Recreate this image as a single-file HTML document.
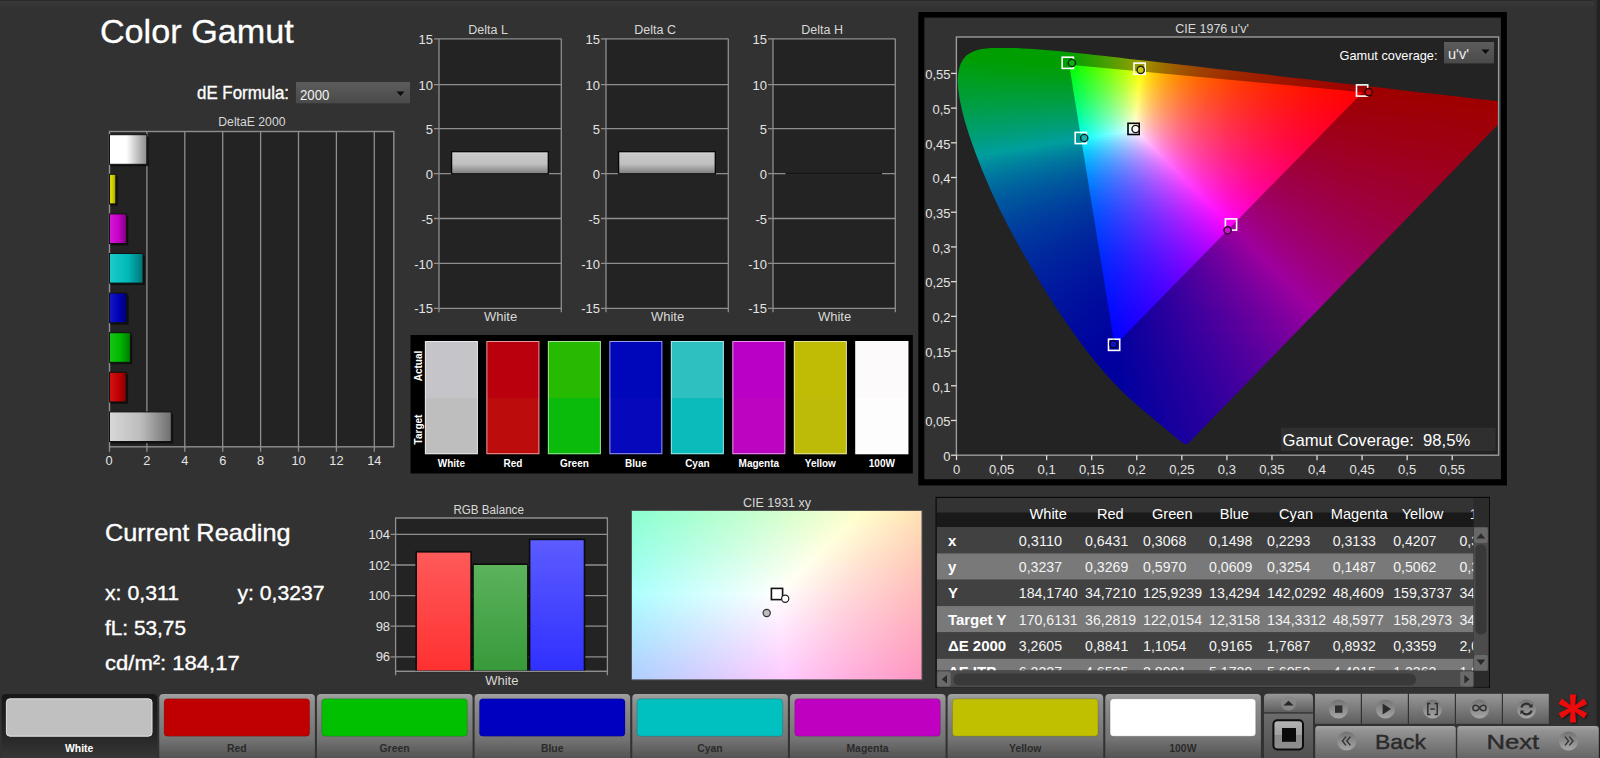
<!DOCTYPE html>
<html><head><meta charset="utf-8"><title>Color Gamut</title>
<style>
html,body{margin:0;padding:0;background:#323232}
body{width:1600px;height:758px;position:relative;overflow:hidden;font-family:"Liberation Sans", sans-serif}
svg{position:absolute;left:0;top:0;font-family:"Liberation Sans", sans-serif}
.cie{position:absolute;overflow:hidden}
.lay{position:absolute;left:0;top:0;width:100%;height:100%}
.cie i{position:absolute;display:block}
.strip{position:absolute;right:0;top:0;width:6px;height:758px;background:linear-gradient(90deg,#323232,#2c2c2c 3.2px,#222 3.6px)}
.topb{position:absolute;left:0;top:0;width:1600px;height:8px;background:linear-gradient(#2b2b2b 0,#2b2b2b 1px,#373737 1.5px,#363636 6px,#323232 8px)}
</style></head><body>
<div class="topb"></div><div class="strip"></div>
<svg width="1600" height="758" viewBox="0 0 1600 758">
<defs>
<linearGradient id="gW" x1="0" x2="1" y1="0" y2="0"><stop offset="0" stop-color="#fff"/><stop offset=".45" stop-color="#fff"/><stop offset="1" stop-color="#8c8c8c"/></linearGradient>
<linearGradient id="gWh" x1="0" x2="1" y1="0" y2="0"><stop offset="0" stop-color="#d8d8d8"/><stop offset=".5" stop-color="#bdbdbd"/><stop offset="1" stop-color="#6e6e6e"/></linearGradient>
<linearGradient id="gY" x1="0" x2="1" y1="0" y2="0"><stop offset="0" stop-color="#e0e010"/><stop offset=".55" stop-color="#cccc00"/><stop offset="1" stop-color="#989800"/></linearGradient>
<linearGradient id="gM" x1="0" x2="1" y1="0" y2="0"><stop offset="0" stop-color="#d818d8"/><stop offset=".55" stop-color="#c400c4"/><stop offset="1" stop-color="#800080"/></linearGradient>
<linearGradient id="gC" x1="0" x2="1" y1="0" y2="0"><stop offset="0" stop-color="#1ccccc"/><stop offset=".55" stop-color="#00b8b8"/><stop offset="1" stop-color="#007474"/></linearGradient>
<linearGradient id="gB" x1="0" x2="1" y1="0" y2="0"><stop offset="0" stop-color="#1818c8"/><stop offset=".55" stop-color="#0000b4"/><stop offset="1" stop-color="#000070"/></linearGradient>
<linearGradient id="gG" x1="0" x2="1" y1="0" y2="0"><stop offset="0" stop-color="#14c814"/><stop offset=".55" stop-color="#00b400"/><stop offset="1" stop-color="#007800"/></linearGradient>
<linearGradient id="gR" x1="0" x2="1" y1="0" y2="0"><stop offset="0" stop-color="#d41414"/><stop offset=".55" stop-color="#c00000"/><stop offset="1" stop-color="#7c0000"/></linearGradient>
<linearGradient id="gD" x1="0" x2="0" y1="0" y2="1"><stop offset="0" stop-color="#eaeaea"/><stop offset=".1" stop-color="#c8c8c8"/><stop offset=".55" stop-color="#c0c0c0"/><stop offset="1" stop-color="#7c7c7c"/></linearGradient>
<linearGradient id="bR" x1="0" x2="0" y1="0" y2="1"><stop offset="0" stop-color="#ff5a5a"/><stop offset="1" stop-color="#ff3030"/></linearGradient>
<linearGradient id="bG" x1="0" x2="0" y1="0" y2="1"><stop offset="0" stop-color="#5cb35c"/><stop offset="1" stop-color="#37993a"/></linearGradient>
<linearGradient id="bB" x1="0" x2="0" y1="0" y2="1"><stop offset="0" stop-color="#5c5cff"/><stop offset="1" stop-color="#3030ff"/></linearGradient>
<linearGradient id="dd" x1="0" x2="0" y1="0" y2="1"><stop offset="0" stop-color="#5c5c5c"/><stop offset="1" stop-color="#4a4a4a"/></linearGradient>
<linearGradient id="th" x1="0" x2="0" y1="0" y2="1"><stop offset="0" stop-color="#2c2c2c"/><stop offset=".55" stop-color="#1c1c1c"/><stop offset=".56" stop-color="#0c0c0c"/><stop offset="1" stop-color="#111"/></linearGradient>
</defs>
<rect x="109.5" y="131.5" width="284.3" height="315.3" fill="#232323"/>
<line x1="146.9" y1="131.5" x2="146.9" y2="451.8" stroke="#8f8f8f" stroke-width="1.3"/>
<line x1="184.8" y1="131.5" x2="184.8" y2="451.8" stroke="#8f8f8f" stroke-width="1.3"/>
<line x1="222.7" y1="131.5" x2="222.7" y2="451.8" stroke="#8f8f8f" stroke-width="1.3"/>
<line x1="260.6" y1="131.5" x2="260.6" y2="451.8" stroke="#8f8f8f" stroke-width="1.3"/>
<line x1="298.5" y1="131.5" x2="298.5" y2="451.8" stroke="#8f8f8f" stroke-width="1.3"/>
<line x1="336.4" y1="131.5" x2="336.4" y2="451.8" stroke="#8f8f8f" stroke-width="1.3"/>
<line x1="374.3" y1="131.5" x2="374.3" y2="451.8" stroke="#8f8f8f" stroke-width="1.3"/>
<line x1="109.5" y1="451.8" x2="109.5" y2="446.8" stroke="#8f8f8f" stroke-width="1.3"/>
<rect x="109.5" y="131.5" width="284.3" height="315.3" fill="none" stroke="#8f8f8f" stroke-width="1.4"/>
<rect x="110.5" y="136.6" width="38.1315" height="29.6" fill="#0a0a0a" opacity=".8"/>
<rect x="109.5" y="134.7" width="37.3315" height="29.6" fill="url(#gW)" stroke="#111" stroke-width="1"/>
<rect x="110.5" y="176.2" width="7.1653" height="29.6" fill="#0a0a0a" opacity=".8"/>
<rect x="109.5" y="174.3" width="6.3653" height="29.6" fill="url(#gY)" stroke="#111" stroke-width="1"/>
<rect x="110.5" y="215.8" width="17.7261" height="29.6" fill="#0a0a0a" opacity=".8"/>
<rect x="109.5" y="213.9" width="16.9261" height="29.6" fill="url(#gM)" stroke="#111" stroke-width="1"/>
<rect x="110.5" y="255.4" width="34.3169" height="29.6" fill="#0a0a0a" opacity=".8"/>
<rect x="109.5" y="253.5" width="33.5169" height="29.6" fill="url(#gC)" stroke="#111" stroke-width="1"/>
<rect x="110.5" y="295" width="18.1677" height="29.6" fill="#0a0a0a" opacity=".8"/>
<rect x="109.5" y="293.1" width="17.3677" height="29.6" fill="url(#gB)" stroke="#111" stroke-width="1"/>
<rect x="110.5" y="334.6" width="21.7473" height="29.6" fill="#0a0a0a" opacity=".8"/>
<rect x="109.5" y="332.7" width="20.9473" height="29.6" fill="url(#gG)" stroke="#111" stroke-width="1"/>
<rect x="110.5" y="374.2" width="17.5537" height="29.6" fill="#0a0a0a" opacity=".8"/>
<rect x="109.5" y="372.3" width="16.7537" height="29.6" fill="url(#gR)" stroke="#111" stroke-width="1"/>
<rect x="110.5" y="413.8" width="62.5865" height="29.6" fill="#0a0a0a" opacity=".8"/>
<rect x="109.5" y="411.9" width="61.7865" height="29.6" fill="url(#gWh)" stroke="#111" stroke-width="1"/>
<text x="109" y="465.2" font-size="12.8" fill="#e4e4e4" text-anchor="middle">0</text>
<text x="146.9" y="465.2" font-size="12.8" fill="#e4e4e4" text-anchor="middle">2</text>
<text x="184.8" y="465.2" font-size="12.8" fill="#e4e4e4" text-anchor="middle">4</text>
<text x="222.7" y="465.2" font-size="12.8" fill="#e4e4e4" text-anchor="middle">6</text>
<text x="260.6" y="465.2" font-size="12.8" fill="#e4e4e4" text-anchor="middle">8</text>
<text x="298.5" y="465.2" font-size="12.8" fill="#e4e4e4" text-anchor="middle">10</text>
<text x="336.4" y="465.2" font-size="12.8" fill="#e4e4e4" text-anchor="middle">12</text>
<text x="374.3" y="465.2" font-size="12.8" fill="#e4e4e4" text-anchor="middle">14</text>
<text x="218.3" y="126.4" font-size="12.5" fill="#d8d8d8" textLength="67.2" lengthAdjust="spacingAndGlyphs">DeltaE 2000</text>
<rect x="439" y="38.8" width="122.3" height="269.55" fill="#232323"/>
<line x1="434" y1="38.8" x2="561.3" y2="38.8" stroke="#8f8f8f" stroke-width="1.3"/>
<text x="433" y="43.9" font-size="13" fill="#e4e4e4" text-anchor="end">15</text>
<line x1="434" y1="84.625" x2="561.3" y2="84.625" stroke="#8f8f8f" stroke-width="1.3"/>
<text x="433" y="89.725" font-size="13" fill="#e4e4e4" text-anchor="end">10</text>
<line x1="434" y1="128.65" x2="561.3" y2="128.65" stroke="#8f8f8f" stroke-width="1.3"/>
<text x="433" y="133.75" font-size="13" fill="#e4e4e4" text-anchor="end">5</text>
<line x1="434" y1="173.575" x2="561.3" y2="173.575" stroke="#8f8f8f" stroke-width="1.3"/>
<text x="433" y="178.675" font-size="13" fill="#e4e4e4" text-anchor="end">0</text>
<line x1="434" y1="218.5" x2="561.3" y2="218.5" stroke="#8f8f8f" stroke-width="1.3"/>
<text x="433" y="223.6" font-size="13" fill="#e4e4e4" text-anchor="end">-5</text>
<line x1="434" y1="263.425" x2="561.3" y2="263.425" stroke="#8f8f8f" stroke-width="1.3"/>
<text x="433" y="268.525" font-size="13" fill="#e4e4e4" text-anchor="end">-10</text>
<line x1="434" y1="308.35" x2="561.3" y2="308.35" stroke="#8f8f8f" stroke-width="1.3"/>
<text x="433" y="313.45" font-size="13" fill="#e4e4e4" text-anchor="end">-15</text>
<line x1="439" y1="38.8" x2="439" y2="312.35" stroke="#8f8f8f" stroke-width="1.3"/>
<line x1="561.3" y1="38.8" x2="561.3" y2="312.35" stroke="#8f8f8f" stroke-width="1.3"/>
<rect x="451.6" y="151.7" width="96.7" height="22.2" fill="url(#gD)" stroke="#050505" stroke-width="1.3"/>
<text x="488.15" y="33.7" font-size="12.5" fill="#d8d8d8" text-anchor="middle">Delta L</text>
<text x="500.5" y="321.3" font-size="13" fill="#d8d8d8" text-anchor="middle">White</text>
<rect x="606" y="38.8" width="122.3" height="269.55" fill="#232323"/>
<line x1="601" y1="38.8" x2="728.3" y2="38.8" stroke="#8f8f8f" stroke-width="1.3"/>
<text x="600" y="43.9" font-size="13" fill="#e4e4e4" text-anchor="end">15</text>
<line x1="601" y1="84.625" x2="728.3" y2="84.625" stroke="#8f8f8f" stroke-width="1.3"/>
<text x="600" y="89.725" font-size="13" fill="#e4e4e4" text-anchor="end">10</text>
<line x1="601" y1="128.65" x2="728.3" y2="128.65" stroke="#8f8f8f" stroke-width="1.3"/>
<text x="600" y="133.75" font-size="13" fill="#e4e4e4" text-anchor="end">5</text>
<line x1="601" y1="173.575" x2="728.3" y2="173.575" stroke="#8f8f8f" stroke-width="1.3"/>
<text x="600" y="178.675" font-size="13" fill="#e4e4e4" text-anchor="end">0</text>
<line x1="601" y1="218.5" x2="728.3" y2="218.5" stroke="#8f8f8f" stroke-width="1.3"/>
<text x="600" y="223.6" font-size="13" fill="#e4e4e4" text-anchor="end">-5</text>
<line x1="601" y1="263.425" x2="728.3" y2="263.425" stroke="#8f8f8f" stroke-width="1.3"/>
<text x="600" y="268.525" font-size="13" fill="#e4e4e4" text-anchor="end">-10</text>
<line x1="601" y1="308.35" x2="728.3" y2="308.35" stroke="#8f8f8f" stroke-width="1.3"/>
<text x="600" y="313.45" font-size="13" fill="#e4e4e4" text-anchor="end">-15</text>
<line x1="606" y1="38.8" x2="606" y2="312.35" stroke="#8f8f8f" stroke-width="1.3"/>
<line x1="728.3" y1="38.8" x2="728.3" y2="312.35" stroke="#8f8f8f" stroke-width="1.3"/>
<rect x="618.6" y="151.7" width="96.7" height="22.2" fill="url(#gD)" stroke="#050505" stroke-width="1.3"/>
<text x="655.15" y="33.7" font-size="12.5" fill="#d8d8d8" text-anchor="middle">Delta C</text>
<text x="667.5" y="321.3" font-size="13" fill="#d8d8d8" text-anchor="middle">White</text>
<rect x="773" y="38.8" width="122.3" height="269.55" fill="#232323"/>
<line x1="768" y1="38.8" x2="895.3" y2="38.8" stroke="#8f8f8f" stroke-width="1.3"/>
<text x="767" y="43.9" font-size="13" fill="#e4e4e4" text-anchor="end">15</text>
<line x1="768" y1="84.625" x2="895.3" y2="84.625" stroke="#8f8f8f" stroke-width="1.3"/>
<text x="767" y="89.725" font-size="13" fill="#e4e4e4" text-anchor="end">10</text>
<line x1="768" y1="128.65" x2="895.3" y2="128.65" stroke="#8f8f8f" stroke-width="1.3"/>
<text x="767" y="133.75" font-size="13" fill="#e4e4e4" text-anchor="end">5</text>
<line x1="768" y1="173.575" x2="895.3" y2="173.575" stroke="#8f8f8f" stroke-width="1.3"/>
<text x="767" y="178.675" font-size="13" fill="#e4e4e4" text-anchor="end">0</text>
<line x1="768" y1="218.5" x2="895.3" y2="218.5" stroke="#8f8f8f" stroke-width="1.3"/>
<text x="767" y="223.6" font-size="13" fill="#e4e4e4" text-anchor="end">-5</text>
<line x1="768" y1="263.425" x2="895.3" y2="263.425" stroke="#8f8f8f" stroke-width="1.3"/>
<text x="767" y="268.525" font-size="13" fill="#e4e4e4" text-anchor="end">-10</text>
<line x1="768" y1="308.35" x2="895.3" y2="308.35" stroke="#8f8f8f" stroke-width="1.3"/>
<text x="767" y="313.45" font-size="13" fill="#e4e4e4" text-anchor="end">-15</text>
<line x1="773" y1="38.8" x2="773" y2="312.35" stroke="#8f8f8f" stroke-width="1.3"/>
<line x1="895.3" y1="38.8" x2="895.3" y2="312.35" stroke="#8f8f8f" stroke-width="1.3"/>
<rect x="785.5" y="172.775" width="96.5" height="1.8" fill="#151515"/>
<text x="822.15" y="33.7" font-size="12.5" fill="#d8d8d8" text-anchor="middle">Delta H</text>
<text x="834.5" y="321.3" font-size="13" fill="#d8d8d8" text-anchor="middle">White</text>
<rect x="410.5" y="335" width="502.3" height="138.5" fill="#000"/>
<rect x="424.9" y="341" width="53" height="57" fill="#c5c4c9"/>
<rect x="424.9" y="398" width="53" height="56.2" fill="#bebebe"/>
<rect x="425.4" y="341.5" width="52" height="112.2" fill="none" stroke="#fff" stroke-opacity=".6" stroke-width="1"/>
<text x="451.4" y="467" font-size="10" fill="#fff" text-anchor="middle" font-weight="bold">White</text>
<rect x="486.39" y="341" width="53" height="57" fill="#b9000c"/>
<rect x="486.39" y="398" width="53" height="56.2" fill="#bd0c0c"/>
<rect x="486.89" y="341.5" width="52" height="112.2" fill="none" stroke="#fff" stroke-opacity=".6" stroke-width="1"/>
<text x="512.89" y="467" font-size="10" fill="#fff" text-anchor="middle" font-weight="bold">Red</text>
<rect x="547.88" y="341" width="53" height="57" fill="#26bb00"/>
<rect x="547.88" y="398" width="53" height="56.2" fill="#0bbb0b"/>
<rect x="548.38" y="341.5" width="52" height="112.2" fill="none" stroke="#fff" stroke-opacity=".6" stroke-width="1"/>
<text x="574.38" y="467" font-size="10" fill="#fff" text-anchor="middle" font-weight="bold">Green</text>
<rect x="609.37" y="341" width="53" height="57" fill="#0007bb"/>
<rect x="609.37" y="398" width="53" height="56.2" fill="#0509bb"/>
<rect x="609.87" y="341.5" width="52" height="112.2" fill="none" stroke="#fff" stroke-opacity=".6" stroke-width="1"/>
<text x="635.87" y="467" font-size="10" fill="#fff" text-anchor="middle" font-weight="bold">Blue</text>
<rect x="670.86" y="341" width="53" height="57" fill="#2ec0c0"/>
<rect x="670.86" y="398" width="53" height="56.2" fill="#0bbbbb"/>
<rect x="671.36" y="341.5" width="52" height="112.2" fill="none" stroke="#fff" stroke-opacity=".6" stroke-width="1"/>
<text x="697.36" y="467" font-size="10" fill="#fff" text-anchor="middle" font-weight="bold">Cyan</text>
<rect x="732.35" y="341" width="53" height="57" fill="#bb00c5"/>
<rect x="732.35" y="398" width="53" height="56.2" fill="#bb05c0"/>
<rect x="732.85" y="341.5" width="52" height="112.2" fill="none" stroke="#fff" stroke-opacity=".6" stroke-width="1"/>
<text x="758.85" y="467" font-size="10" fill="#fff" text-anchor="middle" font-weight="bold">Magenta</text>
<rect x="793.84" y="341" width="53" height="57" fill="#c0bc06"/>
<rect x="793.84" y="398" width="53" height="56.2" fill="#bebb08"/>
<rect x="794.34" y="341.5" width="52" height="112.2" fill="none" stroke="#fff" stroke-opacity=".6" stroke-width="1"/>
<text x="820.34" y="467" font-size="10" fill="#fff" text-anchor="middle" font-weight="bold">Yellow</text>
<rect x="855.33" y="341" width="53" height="57" fill="#fdfafc"/>
<rect x="855.33" y="398" width="53" height="56.2" fill="#fefdfe"/>
<rect x="855.83" y="341.5" width="52" height="112.2" fill="none" stroke="#fff" stroke-opacity=".6" stroke-width="1"/>
<text x="881.83" y="467" font-size="10" fill="#fff" text-anchor="middle" font-weight="bold">100W</text>
<text transform="translate(421.5,366) rotate(-90)" font-size="10" fill="#fff" font-weight="bold" text-anchor="middle">Actual</text>
<text transform="translate(421.5,429.5) rotate(-90)" font-size="10" fill="#fff" font-weight="bold" text-anchor="middle">Target</text>
<rect x="918.3" y="12" width="588.6" height="473.5" fill="#000"/>
<rect x="924.3" y="17.6" width="576.6" height="461.6" fill="#323232"/>
<rect x="956.4" y="37" width="542.2" height="418.2" fill="#232323"/>
<text x="1212" y="32.5" font-size="12.5" fill="#d8d8d8" text-anchor="middle">CIE 1976 u'v'</text>
<rect x="395.6" y="518" width="211.8" height="153.3" fill="#232323"/>
<line x1="390.6" y1="656.8" x2="607.4" y2="656.8" stroke="#8f8f8f" stroke-width="1.3"/>
<text x="390.1" y="661.4" font-size="13" fill="#e4e4e4" text-anchor="end">96</text>
<line x1="390.6" y1="626.2" x2="607.4" y2="626.2" stroke="#8f8f8f" stroke-width="1.3"/>
<text x="390.1" y="630.8" font-size="13" fill="#e4e4e4" text-anchor="end">98</text>
<line x1="390.6" y1="595.6" x2="607.4" y2="595.6" stroke="#8f8f8f" stroke-width="1.3"/>
<text x="390.1" y="600.2" font-size="13" fill="#e4e4e4" text-anchor="end">100</text>
<line x1="390.6" y1="565" x2="607.4" y2="565" stroke="#8f8f8f" stroke-width="1.3"/>
<text x="390.1" y="569.6" font-size="13" fill="#e4e4e4" text-anchor="end">102</text>
<line x1="390.6" y1="534.4" x2="607.4" y2="534.4" stroke="#8f8f8f" stroke-width="1.3"/>
<text x="390.1" y="539" font-size="13" fill="#e4e4e4" text-anchor="end">104</text>
<path d="M395.6 675.3V518H607.4V675.3M395.6 671.3H607.4" fill="none" stroke="#8f8f8f" stroke-width="1.3"/>
<rect x="416.2" y="551.8" width="54.9" height="119.5" fill="url(#bR)" stroke="#0c0c0c" stroke-width="1.6"/>
<rect x="473" y="564.2" width="54.9" height="107.1" fill="url(#bG)" stroke="#0c0c0c" stroke-width="1.6"/>
<rect x="529.6" y="539.4" width="54.9" height="131.9" fill="url(#bB)" stroke="#0c0c0c" stroke-width="1.6"/>
<line x1="395.6" y1="671.3" x2="607.4" y2="671.3" stroke="#8f8f8f" stroke-width="1.3"/>
<text x="453.4" y="513.6" font-size="12.5" fill="#d8d8d8" textLength="70.5" lengthAdjust="spacingAndGlyphs">RGB Balance</text>
<text x="501.8" y="685" font-size="13" fill="#d8d8d8" text-anchor="middle">White</text>
<text x="777" y="507" font-size="12.5" fill="#d8d8d8" text-anchor="middle">CIE 1931 xy</text>
<text x="99.9" y="42.9" font-size="32.6" fill="#fff" textLength="193.9" lengthAdjust="spacingAndGlyphs" stroke="#fff" stroke-width=".3">Color Gamut</text>
<text x="197" y="99" font-size="18.6" fill="#fff" textLength="92" lengthAdjust="spacingAndGlyphs" stroke="#fff" stroke-width=".35">dE Formula:</text>
<rect x="296" y="82" width="114" height="21.3" fill="url(#dd)"/>
<text x="300" y="99.6" font-size="14.2" fill="#f0f0f0" textLength="29.3" lengthAdjust="spacingAndGlyphs">2000</text>
<path d="M396.5 91.5h8l-4 4.6z" fill="#0c0c0c"/>
<text x="105" y="540.6" font-size="23.6" fill="#fff" textLength="185.6" lengthAdjust="spacingAndGlyphs" stroke="#fff" stroke-width=".35">Current Reading</text>
<text x="105" y="599.8" font-size="20" fill="#fff" textLength="74" lengthAdjust="spacingAndGlyphs" stroke="#fff" stroke-width=".35">x: 0,311</text>
<text x="237.4" y="599.8" font-size="20" fill="#fff" textLength="87.1" lengthAdjust="spacingAndGlyphs" stroke="#fff" stroke-width=".35">y: 0,3237</text>
<text x="105" y="635.4" font-size="20" fill="#fff" textLength="81" lengthAdjust="spacingAndGlyphs" stroke="#fff" stroke-width=".35">fL: 53,75</text>
<text x="105" y="670" font-size="20" fill="#fff" textLength="134.7" lengthAdjust="spacingAndGlyphs" stroke="#fff" stroke-width=".35">cd/m²: 184,17</text>
</svg>
<div class="cie" style="left:957px;top:37px;width:542px;height:418px"><div class="lay" style="clip-path:polygon(231.0px 406.8px,230.9px 406.7px,230.9px 406.7px,230.8px 406.8px,230.7px 406.8px,230.6px 406.9px,230.4px 406.8px,230.3px 406.8px,230.2px 406.9px,230.1px 407.1px,230.0px 407.1px,229.9px 407.2px,229.7px 407.2px,229.4px 407.2px,229.1px 407.1px,228.9px 407.1px,228.6px 407.2px,228.3px 407.1px,227.9px 407.0px,227.5px 406.8px,226.8px 406.5px,226.0px 406.0px,225.0px 405.3px,223.9px 404.5px,222.7px 403.6px,221.3px 402.5px,219.6px 401.2px,217.8px 399.7px,215.8px 398.0px,213.5px 396.1px,211.1px 394.0px,208.4px 391.7px,205.4px 389.2px,202.1px 386.5px,198.3px 383.4px,194.3px 380.0px,189.9px 376.4px,185.2px 372.5px,180.1px 368.1px,174.6px 363.2px,168.6px 357.7px,162.3px 351.6px,155.5px 344.6px,147.8px 336.0px,139.0px 325.6px,129.4px 313.4px,119.2px 299.7px,108.4px 284.5px,97.2px 267.7px,85.7px 249.4px,74.1px 230.2px,62.7px 210.4px,51.7px 190.3px,41.6px 170.3px,32.7px 150.9px,24.9px 132.4px,18.1px 115.1px,12.5px 99.3px,8.1px 85.2px,4.9px 72.8px,2.6px 62.0px,1.3px 52.7px,0.7px 44.7px,1.0px 37.8px,2.0px 31.9px,3.7px 26.8px,6.0px 22.5px,8.9px 19.1px,12.3px 16.4px,16.2px 14.4px,20.3px 13.0px,24.8px 12.1px,29.5px 11.5px,34.4px 11.1px,39.5px 11.0px,44.6px 10.9px,49.7px 10.9px,54.9px 11.0px,60.1px 11.1px,65.4px 11.4px,70.9px 11.7px,76.5px 12.0px,82.4px 12.5px,88.4px 13.0px,94.6px 13.5px,101.1px 14.1px,107.8px 14.8px,114.8px 15.5px,122.0px 16.3px,129.6px 17.1px,137.5px 17.9px,145.7px 18.8px,154.3px 19.8px,163.2px 20.8px,172.4px 21.9px,182.1px 22.9px,192.1px 24.1px,202.5px 25.3px,213.3px 26.5px,224.4px 27.8px,235.9px 29.1px,247.8px 30.5px,260.0px 31.9px,272.5px 33.3px,285.3px 34.8px,298.3px 36.3px,311.5px 37.8px,324.7px 39.4px,337.7px 40.9px,350.5px 42.3px,363.2px 43.8px,375.8px 45.2px,388.2px 46.7px,400.1px 48.0px,411.5px 49.3px,422.3px 50.6px,432.7px 51.8px,442.5px 52.9px,451.7px 54.0px,460.3px 55.0px,468.4px 55.9px,475.9px 56.7px,482.8px 57.5px,489.3px 58.3px,495.4px 59.0px,501.1px 59.6px,506.5px 60.3px,511.6px 60.9px,516.4px 61.4px,520.8px 61.9px,525.0px 62.4px,528.8px 62.8px,532.3px 63.2px,535.5px 63.6px,538.2px 63.9px,540.7px 64.2px,543.0px 64.5px,545.1px 64.7px,546.9px 64.9px,548.6px 65.1px,550.0px 65.3px,551.2px 65.4px,552.2px 65.5px,553.1px 65.6px,554.0px 65.7px,554.8px 65.8px,555.6px 65.9px,556.2px 66.0px,556.9px 66.1px,557.6px 66.2px,558.3px 66.2px,558.9px 66.3px,559.5px 66.4px,560.0px 66.4px,560.4px 66.5px,560.6px 66.5px,560.8px 66.5px,561.0px 66.6px,561.2px 66.6px,561.3px 66.6px,561.3px 66.6px,561.3px 66.6px)">
<i style="left:24px;top:10px;width:54px;height:2px;background:linear-gradient(90deg,#009e00 0px,#009e00 54px)"></i>
<i style="left:16px;top:12px;width:85px;height:2px;background:linear-gradient(90deg,#009e00 0px,#009e00 85px)"></i>
<i style="left:12px;top:14px;width:109px;height:2px;background:linear-gradient(90deg,#009e00 0px,#009e00 98px,#129e00 109px)"></i>
<i style="left:9px;top:16px;width:131px;height:2px;background:linear-gradient(90deg,#009e00 0px,#009e00 101px,#359e00 131px)"></i>
<i style="left:7px;top:18px;width:151px;height:2px;background:linear-gradient(90deg,#009e01 0px,#009e00 104px,#2b9e00 128px,#5b9e00 151px)"></i>
<i style="left:5px;top:20px;width:170px;height:2px;background:linear-gradient(90deg,#009e04 0px,#009e00 36px,#009e00 106px,#3f9e00 140px,#859e00 170px)"></i>
<i style="left:4px;top:22px;width:189px;height:2px;background:linear-gradient(90deg,#009e06 0px,#009e00 58px,#009e00 107px,#1f9e00 125px,#479e00 145px,#719e00 163px,#9d9e00 180px,#9e8900 189px)"></i>
<i style="left:3px;top:24px;width:207px;height:2px;background:linear-gradient(90deg,#009e09 0px,#009e00 80px,#009e00 109px,#259e00 129px,#499e00 147px,#739e00 165px,#9e9e00 181px,#9e8200 193px,#9e6900 207px)"></i>
<i style="left:2px;top:26px;width:226px;height:2px;background:linear-gradient(90deg,#009e0b 0px,#009e00 110px,#229e00 129px,#499e00 148px,#749e00 166px,#9e9e00 182px,#9e8700 191px,#9e7400 201px,#9e6100 213px,#9e5100 226px)"></i>
<i style="left:1px;top:28px;width:244px;height:2px;background:linear-gradient(90deg,#009e0e 0px,#009e02 111px,#209e00 129px,#479e00 148px,#6f9e00 165px,#9e9e00 183px,#9e8000 195px,#9e6700 209px,#9e5200 225px,#9e4000 244px)"></i>
<i style="left:0px;top:30px;width:262px;height:2px;background:linear-gradient(90deg,#009e10 0px,#019e05 113px,#249e02 132px,#499e00 150px,#719e00 167px,#9c9e00 183px,#9e7a00 199px,#9e5e00 216px,#9e4700 237px,#9e3300 262px)"></i>
<i style="left:0px;top:32px;width:280px;height:2px;background:linear-gradient(90deg,#009e13 0px,#009e08 113px,#239e06 132px,#499e03 150px,#729e00 167px,#9d9e00 183px,#9e7500 201px,#9e5600 222px,#9e3d00 248px,#9e2800 280px)"></i>
<i style="left:0px;top:34px;width:297px;height:2px;background:linear-gradient(90deg,#009e15 0px,#009e0c 113px,#219e0a 131px,#499e07 150px,#729e04 167px,#9d9e01 183px,#9e8500 193px,#9e7100 203px,#9e5000 227px,#9e3500 258px,#9e2000 297px)"></i>
<i style="left:0px;top:36px;width:314px;height:2px;background:linear-gradient(90deg,#009e18 0px,#019e0f 114px,#249e0d 133px,#4b9e0b 151px,#729e08 167px,#9e9e06 183px,#9e8503 193px,#9e6f01 204px,#9e5b00 217px,#9e4a00 232px,#9e2e00 268px,#9e1900 314px)"></i>
<i style="left:0px;top:38px;width:332px;height:2px;background:linear-gradient(90deg,#009e1a 0px,#009e12 114px,#249e10 133px,#499e0f 150px,#729e0c 167px,#9e9e0a 183px,#9e8207 194px,#9e6b04 206px,#9e5702 220px,#9e4400 237px,#9e3500 256px,#9e2800 278px,#9e1300 332px)"></i>
<i style="left:0px;top:40px;width:349px;height:2px;background:linear-gradient(90deg,#009e1d 0px,#009e16 114px,#209e14 131px,#499e12 150px,#729e10 167px,#9c9e0e 182px,#9e7f0a 195px,#9e6707 208px,#9e5304 223px,#9e4001 241px,#9e3100 262px,#9e2300 287px,#9e0e00 349px)"></i>
<i style="left:0px;top:42px;width:366px;height:2px;background:linear-gradient(90deg,#009e1f 0px,#019e19 115px,#239e18 133px,#489e16 150px,#6d9e15 165px,#9e9d13 183px,#9e7e0e 195px,#9e650a 209px,#9e4f06 226px,#9e3c03 246px,#9e2c01 269px,#9e1f00 296px,#9e0900 366px)"></i>
<i style="left:0px;top:44px;width:384px;height:2px;background:linear-gradient(90deg,#009e22 0px,#009e1d 115px,#239e1c 133px,#469e1a 149px,#6b9e19 164px,#9e9c17 183px,#9e7c11 196px,#9e610c 211px,#9e4b08 229px,#9e3805 250px,#9e2802 276px,#9e1a00 306px,#9e0500 384px)"></i>
<i style="left:0px;top:46px;width:401px;height:2px;background:linear-gradient(90deg,#009e25 0px,#009e20 115px,#1e9e20 131px,#469e1e 149px,#709e1d 166px,#9e9e1c 182px,#9e9b1b 183px,#9e7b15 196px,#9e5f0f 212px,#9e480a 231px,#9e3506 254px,#9e2503 281px,#9e1700 314px,#9e0200 401px)"></i>
<i style="left:0px;top:48px;width:419px;height:2px;background:linear-gradient(90deg,#009e27 0px,#019e24 116px,#249e23 134px,#4a9e22 151px,#739e22 167px,#9e9e21 182px,#9e7a19 196px,#9e5d12 213px,#9e450c 233px,#9e3108 258px,#9e2004 289px,#9e1301 326px,#9e0600 376px,#9e0000 419px)"></i>
<i style="left:0px;top:50px;width:436px;height:2px;background:linear-gradient(90deg,#009e2a 0px,#009e28 116px,#249e27 134px,#489e27 150px,#6e9e26 165px,#9e9d25 182px,#9e781c 197px,#9e5a14 215px,#9e410e 237px,#9e2e09 263px,#9e1c05 298px,#9e0e01 342px,#9e0000 409px,#9e0000 436px)"></i>
<i style="left:0px;top:52px;width:454px;height:2px;background:linear-gradient(90deg,#009e2d 0px,#009e2c 116px,#219e2b 133px,#489e2b 150px,#6e9e2b 165px,#9e9d2a 182px,#9e7720 197px,#9e5817 216px,#9e3f10 239px,#9e2a0a 268px,#9e1805 308px,#9e0901 359px,#9e0000 408px,#9e0000 454px)"></i>
<i style="left:0px;top:54px;width:471px;height:2px;background:linear-gradient(90deg,#009e2f 0px,#019e2f 117px,#239e2f 134px,#489e2f 150px,#6b9e2f 164px,#9e9c2f 182px,#9e8628 190px,#9e7523 198px,#9e5519 218px,#9e3b11 243px,#9e270b 273px,#9e1406 318px,#9e0501 376px,#9e0000 406px,#9e0000 471px)"></i>
<i style="left:0px;top:56px;width:488px;height:2px;background:linear-gradient(90deg,#009e32 0px,#009e33 117px,#239e33 134px,#479e34 150px,#719e34 166px,#9d9e34 181px,#9e9c33 182px,#9e862c 190px,#9e7427 198px,#9e531c 219px,#9e3913 245px,#9e240d 277px,#9e1106 327px,#9e0202 393px,#9e0000 488px)"></i>
<i style="left:0px;top:58px;width:506px;height:2px;background:linear-gradient(90deg,#009e35 0px,#009e37 117px,#229e38 134px,#4a9e38 151px,#719e39 166px,#9e9e39 181px,#9e8731 189px,#9e732a 198px,#9e521f 219px,#9e3715 246px,#9e220e 281px,#9e0f07 333px,#9e0002 402px,#9e0000 506px)"></i>
<i style="left:1px;top:60px;width:522px;height:2px;background:linear-gradient(90deg,#009e38 0px,#019e3b 117px,#249e3c 134px,#4a9e3d 150px,#719e3d 165px,#9e9e3e 180px,#9e8736 188px,#9e712d 198px,#9e5f27 208px,#9e4f21 220px,#9e3417 248px,#9e1f0f 284px,#9e0e08 334px,#9e0003 399px,#9e0000 522px)"></i>
<i style="left:1px;top:62px;width:539px;height:2px;background:linear-gradient(90deg,#009e3b 0px,#009e3f 117px,#249e40 134px,#499e41 150px,#6f9e42 164px,#9e9d43 180px,#9e863a 188px,#9e7031 198px,#9e5d2a 209px,#9e4d23 221px,#9e3219 250px,#9e1d10 288px,#9e0d0a 336px,#9e0004 397px,#9e0000 539px)"></i>
<i style="left:2px;top:64px;width:540px;height:2px;background:linear-gradient(90deg,#009e3e 0px,#009e43 116px,#219e44 132px,#479e46 148px,#6c9e47 162px,#9e9c48 179px,#9e853e 187px,#9e6f35 197px,#9e5d2d 208px,#9e4d26 220px,#9e321b 249px,#9e1d12 287px,#9e0d0b 334px,#9e0006 394px,#9e0000 540px)"></i>
<i style="left:2px;top:66px;width:540px;height:2px;background:linear-gradient(90deg,#009e40 0px,#009e47 116px,#1c9e49 130px,#449e4a 147px,#6f9e4c 163px,#9d9e4e 178px,#9e9c4d 179px,#9e8543 187px,#9e6f39 197px,#9e5c30 208px,#9e4c29 220px,#9e311d 249px,#9e1c14 287px,#9e0c0d 333px,#9e0007 392px,#9e0000 540px)"></i>
<i style="left:2px;top:68px;width:540px;height:2px;background:linear-gradient(90deg,#009e43 0px,#009e4c 117px,#229e4e 133px,#499e50 149px,#729e52 164px,#9e9e54 178px,#9e8447 187px,#9e703e 196px,#9e5d35 207px,#9e4c2d 219px,#9e3120 248px,#9e1c16 286px,#9e0c0e 332px,#9e0008 390px,#9e0000 540px)"></i>
<i style="left:3px;top:70px;width:539px;height:2px;background:linear-gradient(90deg,#009e46 0px,#009e50 116px,#229e52 132px,#499e54 148px,#6f9e57 162px,#9e9e59 177px,#9e864d 185px,#9e6f42 195px,#9e5c38 206px,#9e4c30 218px,#9e3122 247px,#9e1c17 285px,#9e0c10 330px,#9e0009 387px,#9e0001 539px)"></i>
<i style="left:3px;top:72px;width:539px;height:2px;background:linear-gradient(90deg,#009e49 0px,#009e54 116px,#1d9e56 130px,#469e59 147px,#6d9e5c 161px,#9e9d5f 177px,#9e8552 185px,#9e7147 194px,#9e5d3c 205px,#9e4c33 217px,#9e3024 247px,#9e1b19 285px,#9e0c11 329px,#9e000b 385px,#9e0002 539px)"></i>
<i style="left:4px;top:74px;width:538px;height:2px;background:linear-gradient(90deg,#009e4d 0px,#009e59 116px,#239e5c 132px,#499e5e 147px,#6d9e61 160px,#9e9c64 176px,#9e8557 184px,#9e704b 193px,#9e5c40 204px,#9e4c37 216px,#9e3027 246px,#9e1b1b 284px,#9e0c13 327px,#9e000c 382px,#9e0002 538px)"></i>
<i style="left:4px;top:76px;width:538px;height:2px;background:linear-gradient(90deg,#009e50 0px,#009e5e 116px,#219e60 131px,#469e63 146px,#709e67 161px,#9d9e6b 175px,#9e9c69 176px,#9e845b 184px,#9e6f4f 193px,#9e5c43 204px,#9e4b3a 216px,#9e2f29 246px,#9e1a1d 284px,#9e0c14 327px,#9e000d 380px,#9e0003 538px)"></i>
<i style="left:5px;top:78px;width:537px;height:2px;background:linear-gradient(90deg,#009e53 0px,#009e62 115px,#1c9e65 128px,#439e68 144px,#709e6d 160px,#9e9e71 174px,#9e9b6f 175px,#9e8360 183px,#9e6f53 192px,#9e5b47 203px,#9e4a3d 215px,#9e2f2c 244px,#9e1a1f 282px,#9e0c16 324px,#9e000f 377px,#9e0004 537px)"></i>
<i style="left:5px;top:80px;width:537px;height:2px;background:linear-gradient(90deg,#009e56 0px,#009e67 116px,#249e6b 132px,#4b9e6f 147px,#739e73 161px,#9e9e77 174px,#9e8567 182px,#9e7059 191px,#9e5c4c 202px,#9e4b41 214px,#9e302f 243px,#9e1a21 281px,#9e0c17 323px,#9e0010 375px,#9e0005 537px)"></i>
<i style="left:6px;top:82px;width:536px;height:2px;background:linear-gradient(90deg,#009e59 0px,#009e6c 115px,#229e6f 130px,#489e74 145px,#6e9e78 158px,#9e9d7d 173px,#9e856c 181px,#9e6f5d 190px,#9e5b4f 201px,#9e4a44 213px,#9e2f31 242px,#9e1a23 280px,#9e0b19 321px,#9e0011 372px,#9e0005 536px)"></i>
<i style="left:6px;top:84px;width:536px;height:2px;background:linear-gradient(90deg,#009e5c 0px,#009e71 115px,#1c9e74 128px,#459e79 144px,#6b9e7d 157px,#9e9d82 173px,#9e8471 181px,#9e6e61 190px,#9e5a53 201px,#9e4a47 213px,#9e2e34 242px,#9e1925 280px,#9e0b1b 321px,#9e0013 371px,#9e0006 536px)"></i>
<i style="left:7px;top:86px;width:535px;height:2px;background:linear-gradient(90deg,#009e60 0px,#009e6a 63px,#019e76 115px,#239e7a 130px,#489e7f 144px,#719e84 158px,#9d9e8a 171px,#9e9c88 172px,#9e8376 180px,#9e6e66 189px,#9e5a57 200px,#9e494b 212px,#9e2e36 241px,#9e1926 279px,#9e0b1c 319px,#9e0014 368px,#9e0007 535px)"></i>
<i style="left:7px;top:88px;width:535px;height:2px;background:linear-gradient(90deg,#009e63 0px,#009e6e 63px,#009e7b 115px,#209e7f 129px,#459e84 143px,#6e9e8a 157px,#9d9e90 171px,#9e9b8e 172px,#9e827b 180px,#9e6d6a 189px,#9e595b 200px,#9e484e 212px,#9e2d39 241px,#9e1828 279px,#9e0b1e 318px,#9e0016 366px,#9e0007 535px)"></i>
<i style="left:8px;top:90px;width:532px;height:2px;background:linear-gradient(90deg,#009e67 0px,#009e72 62px,#009e80 114px,#1d9e84 127px,#479e8a 143px,#719e91 157px,#9e9e97 170px,#9e8482 178px,#9e6e70 187px,#9e5c61 197px,#9e4a53 209px,#9e2e3c 238px,#9e192b 275px,#9e0b20 314px,#9e0017 363px,#9e0008 532px)"></i>
<i style="left:9px;top:92px;width:529px;height:2px;background:linear-gradient(90deg,#009e6a 0px,#009e76 62px,#019e85 114px,#249e8b 129px,#4a9e91 143px,#729e97 156px,#9e9d9d 169px,#9e8488 177px,#9e6e75 186px,#9e5b65 196px,#9e4957 208px,#9e2d3f 237px,#9e182d 274px,#9e0b22 313px,#9e0019 360px,#9e0010 434px,#9e0009 529px)"></i>
<i style="left:9px;top:94px;width:527px;height:2px;background:linear-gradient(90deg,#009e6e 0px,#009e7b 62px,#009e8b 114px,#3c9e94 138px,#759e9e 157px,#9e969d 171px,#9e7e88 179px,#9e6976 188px,#9e5766 198px,#9e4658 210px,#9e2b40 239px,#9e172e 277px,#9e0a23 314px,#9e001a 358px,#9e0011 431px,#9e000a 527px)"></i>
<i style="left:10px;top:96px;width:524px;height:2px;background:linear-gradient(90deg,#009e71 0px,#009e7f 62px,#009e90 113px,#239e96 128px,#509e9e 144px,#9e8e9d 172px,#9e7889 180px,#9e6477 189px,#9e5266 200px,#9e4258 212px,#9e2941 241px,#9e152f 278px,#9e0a24 313px,#9e001c 355px,#9e0012 428px,#9e000b 524px)"></i>
<i style="left:11px;top:98px;width:521px;height:2px;background:linear-gradient(90deg,#009e75 0px,#009e84 62px,#019e96 113px,#2d9e9e 131px,#9e879d 173px,#9e7289 181px,#9e6078 190px,#9e4e67 201px,#9e3f59 213px,#9e2742 242px,#9e1430 280px,#9e001d 352px,#9e0013 425px,#9e000c 521px)"></i>
<i style="left:11px;top:100px;width:519px;height:2px;background:linear-gradient(90deg,#009e79 0px,#009e88 62px,#009e9b 113px,#0e9e9e 119px,#49929e 143px,#9e819d 175px,#9e6d8a 183px,#9e5a77 193px,#9e3b59 216px,#9e2443 245px,#9e1231 283px,#9e001f 350px,#9e0014 423px,#9e000c 519px)"></i>
<i style="left:12px;top:102px;width:516px;height:2px;background:linear-gradient(90deg,#009e7c 0px,#009e8c 58px,#009e9e 106px,#009b9e 112px,#448d9e 141px,#9e7b9d 176px,#9e688a 184px,#9e5578 194px,#9e395a 217px,#9e2243 247px,#9e1031 285px,#9e0021 347px,#9e0016 420px,#9e000d 516px)"></i>
<i style="left:13px;top:104px;width:514px;height:2px;background:linear-gradient(90deg,#009e80 0px,#009e8e 50px,#009e9e 93px,#01969e 112px,#4b869e 144px,#9e759e 177px,#9e638b 185px,#9e5279 195px,#9e355a 219px,#9e2044 249px,#9e0f32 287px,#9e0022 344px,#9e0017 417px,#9e000e 514px)"></i>
<i style="left:13px;top:106px;width:512px;height:2px;background:linear-gradient(90deg,#009e84 0px,#009e9e 81px,#00919e 112px,#4b819e 145px,#9e6f9e 179px,#9e5e8b 187px,#9e4e79 197px,#9e335c 221px,#9e1e45 251px,#9e0e33 289px,#9e0024 342px,#9e0018 415px,#9e000f 512px)"></i>
<i style="left:14px;top:108px;width:509px;height:2px;background:linear-gradient(90deg,#009e88 0px,#009e9e 68px,#008c9e 111px,#467d9e 143px,#9e6a9e 180px,#9e4c7c 197px,#9e3461 218px,#9e214b 244px,#9e1139 277px,#9e0026 339px,#9e0019 412px,#9e0010 509px)"></i>
<i style="left:15px;top:110px;width:506px;height:2px;background:linear-gradient(90deg,#009e8c 0px,#009e9e 55px,#01879e 111px,#4a779e 145px,#9e659e 181px,#9e487c 198px,#9e3162 219px,#9e1f4c 245px,#9e103b 277px,#9e0028 336px,#9e001b 409px,#9e0011 506px)"></i>
<i style="left:15px;top:112px;width:504px;height:2px;background:linear-gradient(90deg,#009e90 0px,#009e9e 43px,#00829e 111px,#4c729e 147px,#9e609e 183px,#9e457d 200px,#9e2f62 221px,#9e1d4d 247px,#9e0f3c 279px,#9e002a 334px,#9e001c 407px,#9e0012 504px)"></i>
<i style="left:16px;top:114px;width:501px;height:2px;background:linear-gradient(90deg,#009e94 0px,#009e9e 30px,#007e9e 110px,#476e9e 145px,#9e5b9e 184px,#9e417e 201px,#9e2d63 222px,#9e1c4e 248px,#9e0e3d 280px,#9e002b 331px,#9e001d 404px,#9e0013 501px)"></i>
<i style="left:17px;top:116px;width:498px;height:2px;background:linear-gradient(90deg,#009e98 0px,#009e9e 17px,#017a9e 110px,#4b699e 147px,#9e579e 185px,#9e3e7e 202px,#9e2a64 223px,#9e1a4f 249px,#9e0d3e 281px,#9e002d 328px,#9e001f 401px,#9e0014 498px)"></i>
<i style="left:18px;top:118px;width:495px;height:2px;background:linear-gradient(90deg,#009e9d 0px,#00769e 109px,#4b659e 147px,#9e529e 186px,#9e3b7f 203px,#9e2865 224px,#9e1850 250px,#9e0c3f 281px,#9e002f 326px,#9e0020 398px,#9e0014 495px)"></i>
<i style="left:18px;top:120px;width:493px;height:2px;background:linear-gradient(90deg,#009b9e 0px,#00729e 109px,#49629e 147px,#9e4e9e 188px,#9e387f 205px,#9e2666 226px,#9e1751 252px,#9e0b40 283px,#9e0031 324px,#9e0021 396px,#9e0015 493px)"></i>
<i style="left:19px;top:122px;width:490px;height:2px;background:linear-gradient(90deg,#00979e 0px,#016f9e 109px,#4c5d9e 149px,#9e4b9e 189px,#9e3680 206px,#9e2467 227px,#9e1552 253px,#9e0941 284px,#9e0033 320px,#9e0028 367px,#9e0016 490px)"></i>
<i style="left:20px;top:124px;width:487px;height:2px;background:linear-gradient(90deg,#00939e 0px,#006b9e 108px,#4c5a9e 149px,#9e479e 190px,#9e3380 207px,#9e2268 228px,#9e1453 253px,#9e0942 284px,#9e0036 317px,#9e0029 366px,#9e0017 487px)"></i>
<i style="left:21px;top:126px;width:484px;height:2px;background:linear-gradient(90deg,#008f9e 0px,#00689e 107px,#4a579e 148px,#9e439e 191px,#9e3081 208px,#9e2068 229px,#9e1354 254px,#9e0843 285px,#9e0037 315px,#9e002a 366px,#9e0018 484px)"></i>
<i style="left:22px;top:128px;width:481px;height:2px;background:linear-gradient(90deg,#008b9e 0px,#01659e 107px,#4d539e 150px,#9e409e 192px,#9e2e81 209px,#9e1e69 230px,#9e1155 255px,#9e0744 285px,#9e003a 312px,#9e002b 365px,#9e0019 481px)"></i>
<i style="left:22px;top:130px;width:479px;height:2px;background:linear-gradient(90deg,#00889e 0px,#00629e 107px,#4d509e 151px,#9e3c9e 194px,#9e2b82 211px,#9e1c6a 232px,#9e1056 257px,#9e0645 287px,#9e003c 310px,#9e002c 366px,#9e001a 479px)"></i>
<i style="left:23px;top:132px;width:476px;height:2px;background:linear-gradient(90deg,#00849e 0px,#005f9e 106px,#4b4d9e 150px,#9e399e 195px,#9e2982 212px,#9e1a6a 233px,#9e0f57 258px,#9e0547 287px,#9e003e 307px,#9e002d 365px,#9e001b 476px)"></i>
<i style="left:24px;top:134px;width:473px;height:2px;background:linear-gradient(90deg,#00819e 0px,#015c9e 106px,#4c4a9e 151px,#9e369e 196px,#9e2683 213px,#9e196b 234px,#9e0d57 259px,#9e0447 288px,#9e0040 304px,#9e002e 364px,#9e001d 473px)"></i>
<i style="left:25px;top:136px;width:470px;height:2px;background:linear-gradient(90deg,#007e9e 0px,#00599e 105px,#4c479e 151px,#9e339e 197px,#9e2483 214px,#9e176c 235px,#9e0c59 259px,#9e0349 288px,#9e0043 301px,#9e0030 363px,#9e001e 470px)"></i>
<i style="left:26px;top:138px;width:467px;height:2px;background:linear-gradient(90deg,#007a9e 0px,#00579e 104px,#4c449e 151px,#9e309e 198px,#9e2284 215px,#9e156c 236px,#9e0b5a 260px,#9e0249 289px,#9e003c 323px,#9e0030 363px,#9e001f 467px)"></i>
<i style="left:27px;top:140px;width:465px;height:2px;background:linear-gradient(90deg,#00779e 0px,#01549e 104px,#4d419e 152px,#9e2e9e 199px,#9e2084 216px,#9e146d 237px,#9e0a5a 261px,#9e014b 289px,#9e003d 322px,#9e0032 362px,#9e0020 465px)"></i>
<i style="left:27px;top:142px;width:463px;height:2px;background:linear-gradient(90deg,#00759e 0px,#00529e 104px,#4d3f9e 153px,#9e2b9e 201px,#9e1e84 218px,#9e126e 239px,#9e095b 263px,#9e004b 291px,#9e003e 324px,#9e0033 363px,#9e0021 463px)"></i>
<i style="left:28px;top:144px;width:460px;height:2px;background:linear-gradient(90deg,#00729e 0px,#004f9e 103px,#4b3d9e 152px,#9e299e 202px,#9e1c85 219px,#9e116f 239px,#9e085c 263px,#9e004d 291px,#9e0034 362px,#9e0022 460px)"></i>
<i style="left:29px;top:146px;width:457px;height:2px;background:linear-gradient(90deg,#006f9e 0px,#014d9e 103px,#4e3a9e 154px,#9e269e 203px,#9e1a85 220px,#9e1070 240px,#9e075e 263px,#9e004e 291px,#9e0035 361px,#9e0023 457px)"></i>
<i style="left:30px;top:148px;width:454px;height:2px;background:linear-gradient(90deg,#006c9e 0px,#004b9e 102px,#4d389e 154px,#9e249e 204px,#9e1886 221px,#9e0e70 241px,#9e055e 265px,#9e004f 292px,#9e0036 361px,#9e0024 454px)"></i>
<i style="left:31px;top:150px;width:451px;height:2px;background:linear-gradient(90deg,#00699e 0px,#00499e 101px,#4c369e 153px,#9e219e 205px,#9e1686 222px,#9e0d71 242px,#9e0056 280px,#9e0050 292px,#9e0037 360px,#9e0025 451px)"></i>
<i style="left:32px;top:152px;width:448px;height:2px;background:linear-gradient(90deg,#00679e 0px,#00479e 100px,#4a349e 152px,#9e1f9e 206px,#9e1486 223px,#9e0b71 243px,#9e0058 278px,#9e0051 292px,#9e0039 358px,#9e0026 448px)"></i>
<i style="left:33px;top:154px;width:445px;height:2px;background:linear-gradient(90deg,#00649e 0px,#00459e 100px,#4e319e 155px,#9e1d9e 207px,#9e1387 224px,#9e0a73 243px,#9e005b 275px,#9e0052 292px,#9e003a 357px,#9e0028 445px)"></i>
<i style="left:33px;top:156px;width:443px;height:2px;background:linear-gradient(90deg,#00629e 0px,#00439e 100px,#4c2f9e 155px,#9e1b9e 209px,#9e1187 226px,#9e0973 245px,#9e005e 273px,#9e0053 293px,#9e003b 357px,#9e0029 443px)"></i>
<i style="left:34px;top:158px;width:440px;height:2px;background:linear-gradient(90deg,#00609e 0px,#00419e 99px,#492e9e 153px,#9e199e 210px,#9e0f87 227px,#9e0774 246px,#9e0062 270px,#9e0054 294px,#9e003c 357px,#9e002a 440px)"></i>
<i style="left:35px;top:160px;width:437px;height:2px;background:linear-gradient(90deg,#005d9e 0px,#003f9e 99px,#4d2b9e 156px,#9e179e 211px,#9e0e88 228px,#9e0674 247px,#9e0065 267px,#9e0055 294px,#9e003d 356px,#9e002b 437px)"></i>
<i style="left:36px;top:162px;width:434px;height:2px;background:linear-gradient(90deg,#005b9e 0px,#003d9e 98px,#4d2a9e 156px,#9e159e 212px,#9e0c88 229px,#9e0575 248px,#9e0068 264px,#9e0056 294px,#9e003e 355px,#9e002d 434px)"></i>
<i style="left:37px;top:164px;width:431px;height:2px;background:linear-gradient(90deg,#00599e 0px,#003c9e 97px,#4a289e 154px,#9e139e 213px,#9e0b89 229px,#9e0476 248px,#9e006c 261px,#9e0057 294px,#9e0040 353px,#9e002e 431px)"></i>
<i style="left:38px;top:166px;width:428px;height:2px;background:linear-gradient(90deg,#00579e 0px,#003a9e 97px,#4e269e 157px,#9e119e 214px,#9e0a8a 230px,#9e0377 249px,#9e006e 259px,#9e0058 294px,#9e0041 352px,#9e002f 428px)"></i>
<i style="left:39px;top:168px;width:425px;height:2px;background:linear-gradient(90deg,#00559e 0px,#00389e 96px,#4e249e 157px,#9e0f9e 215px,#9e0889 232px,#9e0277 250px,#9e005a 294px,#9e0042 351px,#9e0030 425px)"></i>
<i style="left:40px;top:170px;width:422px;height:2px;background:linear-gradient(90deg,#00539e 0px,#00379e 95px,#4b239e 155px,#9e0e9e 216px,#9e078a 232px,#9e0178 250px,#9e005b 294px,#9e0044 350px,#9e0032 422px)"></i>
<i style="left:41px;top:172px;width:419px;height:2px;background:linear-gradient(90deg,#00519e 0px,#00359e 95px,#4d219e 157px,#9e0c9e 217px,#9e058a 233px,#9e0079 251px,#9e005c 294px,#9e0045 349px,#9e0033 419px)"></i>
<i style="left:42px;top:174px;width:417px;height:2px;background:linear-gradient(90deg,#004f9e 0px,#00349e 94px,#4d209e 157px,#9e0a9e 218px,#9e048b 234px,#9e0079 252px,#9e005d 294px,#9e0046 348px,#9e0034 417px)"></i>
<i style="left:43px;top:176px;width:414px;height:2px;background:linear-gradient(90deg,#004d9e 0px,#00329e 93px,#4b1e9e 156px,#9e099e 219px,#9e0083 243px,#9e007a 252px,#9e005e 294px,#9e0047 347px,#9e0036 414px)"></i>
<i style="left:44px;top:178px;width:411px;height:2px;background:linear-gradient(90deg,#004b9e 0px,#00319e 93px,#4e1c9e 158px,#9e079e 220px,#9e0087 240px,#9e007b 253px,#9e005f 294px,#9e0049 346px,#9e0037 411px)"></i>
<i style="left:45px;top:180px;width:408px;height:2px;background:linear-gradient(90deg,#00499e 0px,#002f9e 92px,#4e1b9e 158px,#9e069e 221px,#9e008b 237px,#9e007b 254px,#9e0060 294px,#9e004a 345px,#9e0038 408px)"></i>
<i style="left:46px;top:182px;width:405px;height:2px;background:linear-gradient(90deg,#00479e 0px,#002e9e 91px,#4b1a9e 156px,#9e049e 222px,#9e008f 235px,#9e007c 254px,#9e0061 294px,#9e004c 343px,#9e003a 405px)"></i>
<i style="left:47px;top:184px;width:402px;height:2px;background:linear-gradient(90deg,#00469e 0px,#002d9e 91px,#4d189e 158px,#9e039e 223px,#9e0093 232px,#9e007d 255px,#9e0062 294px,#9e004d 342px,#9e003b 402px)"></i>
<i style="left:48px;top:186px;width:399px;height:2px;background:linear-gradient(90deg,#00449e 0px,#002b9e 90px,#4d179e 158px,#9e029e 224px,#9e007d 256px,#9e0063 294px,#9e004e 341px,#9e003d 399px)"></i>
<i style="left:49px;top:188px;width:396px;height:2px;background:linear-gradient(90deg,#00429e 0px,#002a9e 89px,#4c169e 157px,#9e009e 225px,#9e007e 256px,#9e0064 294px,#9e004f 340px,#9e003e 396px)"></i>
<i style="left:50px;top:190px;width:393px;height:2px;background:linear-gradient(90deg,#00419e 0px,#00299e 89px,#4e149e 159px,#9e009e 226px,#9e007f 256px,#9e0066 293px,#9e0051 338px,#9e0040 393px)"></i>
<i style="left:51px;top:192px;width:390px;height:2px;background:linear-gradient(90deg,#003f9e 0px,#00289e 88px,#4d139e 159px,#9e009e 227px,#9e0080 257px,#9e0067 293px,#9e0052 337px,#9e0041 390px)"></i>
<i style="left:52px;top:194px;width:387px;height:2px;background:linear-gradient(90deg,#003e9e 0px,#00279e 87px,#4c129e 158px,#91009e 217px,#9e009e 228px,#9e0080 258px,#9e0068 293px,#9e0054 336px,#9e0043 387px)"></i>
<i style="left:53px;top:196px;width:384px;height:2px;background:linear-gradient(90deg,#003c9e 0px,#00259e 87px,#45139e 152px,#8c009e 214px,#9e009e 229px,#9e0081 258px,#9e0069 293px,#9e0055 334px,#9e0045 384px)"></i>
<i style="left:54px;top:198px;width:381px;height:2px;background:linear-gradient(90deg,#003b9e 0px,#00249e 86px,#43129e 150px,#88009e 211px,#9e009e 230px,#9e0081 259px,#9e006b 292px,#9e0057 333px,#9e0046 381px)"></i>
<i style="left:55px;top:200px;width:378px;height:2px;background:linear-gradient(90deg,#00399e 0px,#00239e 85px,#3f129e 146px,#83009e 208px,#9e009e 231px,#9e0083 259px,#9e006c 292px,#9e0058 331px,#9e0048 378px)"></i>
<i style="left:56px;top:202px;width:375px;height:2px;background:linear-gradient(90deg,#00389e 0px,#00229e 85px,#3f119e 146px,#7f009e 205px,#9e009e 232px,#9e0083 260px,#9e006d 292px,#9e005a 330px,#9e004a 375px)"></i>
<i style="left:58px;top:204px;width:371px;height:2px;background:linear-gradient(90deg,#00369e 0px,#00219e 83px,#3d119e 143px,#7b009e 201px,#9e009e 232px,#9e0084 259px,#9e006e 290px,#9e005b 327px,#9e004b 371px)"></i>
<i style="left:59px;top:206px;width:368px;height:2px;background:linear-gradient(90deg,#00359e 0px,#00209e 82px,#77009e 198px,#9e009e 233px,#9e0084 260px,#9e006f 290px,#9e005d 326px,#9e004d 368px)"></i>
<i style="left:60px;top:208px;width:366px;height:2px;background:linear-gradient(90deg,#00339e 0px,#001f9e 82px,#73009e 195px,#9e009e 234px,#9e0085 260px,#9e0070 290px,#9e005e 325px,#9e004e 366px)"></i>
<i style="left:61px;top:210px;width:363px;height:2px;background:linear-gradient(90deg,#00329e 0px,#001e9e 81px,#6f009e 192px,#9e009e 235px,#9e0086 261px,#9e0071 290px,#9e005f 324px,#9e0050 363px)"></i>
<i style="left:62px;top:212px;width:360px;height:2px;background:linear-gradient(90deg,#00319e 0px,#001d9e 80px,#6b009e 189px,#9e009e 236px,#9e0087 261px,#9e0073 289px,#9e0061 322px,#9e0052 360px)"></i>
<i style="left:63px;top:214px;width:357px;height:2px;background:linear-gradient(90deg,#00309e 0px,#001c9e 80px,#68009e 186px,#9e009e 237px,#9e0087 262px,#9e0074 289px,#9e0063 321px,#9e0054 357px)"></i>
<i style="left:64px;top:216px;width:354px;height:2px;background:linear-gradient(90deg,#002e9e 0px,#001b9e 79px,#64009e 183px,#9e009e 238px,#9e0088 262px,#9e0075 289px,#9e0064 319px,#9e0056 354px)"></i>
<i style="left:66px;top:218px;width:350px;height:2px;background:linear-gradient(90deg,#002d9e 0px,#001b9e 77px,#61009e 179px,#9e009e 238px,#9e0088 262px,#9e0076 287px,#9e0058 350px)"></i>
<i style="left:67px;top:220px;width:347px;height:2px;background:linear-gradient(90deg,#002c9e 0px,#001a9e 77px,#5d009e 176px,#9e009e 239px,#9e0089 262px,#9e0077 287px,#9e005a 347px)"></i>
<i style="left:68px;top:222px;width:344px;height:2px;background:linear-gradient(90deg,#002b9e 0px,#00199e 76px,#5a009e 173px,#9e009e 240px,#9e008a 262px,#9e0079 286px,#9e005c 344px)"></i>
<i style="left:69px;top:224px;width:341px;height:2px;background:linear-gradient(90deg,#002a9e 0px,#00189e 75px,#57009e 170px,#9e009e 241px,#9e008a 263px,#9e007a 286px,#9e005e 341px)"></i>
<i style="left:70px;top:226px;width:338px;height:2px;background:linear-gradient(90deg,#00289e 0px,#01179e 75px,#54009e 167px,#9e009e 242px,#9e007b 285px,#9e0060 338px)"></i>
<i style="left:71px;top:228px;width:335px;height:2px;background:linear-gradient(90deg,#00279e 0px,#00169e 74px,#52009e 165px,#9e009e 243px,#9e007c 285px,#9e0062 335px)"></i>
<i style="left:73px;top:230px;width:331px;height:2px;background:linear-gradient(90deg,#00269e 0px,#00169e 72px,#4f009e 161px,#9e009e 243px,#9e007e 283px,#9e0064 331px)"></i>
<i style="left:74px;top:232px;width:328px;height:2px;background:linear-gradient(90deg,#00259e 0px,#01159e 72px,#4c009e 158px,#9e009e 244px,#9e007f 282px,#9e0066 328px)"></i>
<i style="left:75px;top:234px;width:325px;height:2px;background:linear-gradient(90deg,#00249e 0px,#00149e 71px,#49009e 155px,#9e009e 245px,#9e0080 282px,#9e0068 325px)"></i>
<i style="left:76px;top:236px;width:322px;height:2px;background:linear-gradient(90deg,#00239e 0px,#00139e 70px,#46009e 152px,#9e009e 246px,#9e0082 281px,#9e006a 322px)"></i>
<i style="left:77px;top:238px;width:319px;height:2px;background:linear-gradient(90deg,#00229e 0px,#01139e 70px,#43009e 149px,#9e009e 247px,#9e0083 281px,#9e006d 319px)"></i>
<i style="left:78px;top:240px;width:316px;height:2px;background:linear-gradient(90deg,#00219e 0px,#00129e 69px,#41009e 146px,#9e009e 248px,#9e0084 280px,#9e006f 316px)"></i>
<i style="left:80px;top:242px;width:313px;height:2px;background:linear-gradient(90deg,#00209e 0px,#00119e 67px,#3e009e 142px,#9e009e 248px,#9e0085 279px,#9e0071 313px)"></i>
<i style="left:81px;top:244px;width:310px;height:2px;background:linear-gradient(90deg,#001f9e 0px,#01109e 67px,#3c009e 139px,#9e009e 249px,#9e0087 278px,#9e0073 310px)"></i>
<i style="left:82px;top:246px;width:307px;height:2px;background:linear-gradient(90deg,#001e9e 0px,#00109e 66px,#39009e 136px,#9e009e 250px,#9e0088 278px,#9e0076 307px)"></i>
<i style="left:83px;top:248px;width:304px;height:2px;background:linear-gradient(90deg,#001d9e 0px,#000f9e 65px,#37009e 133px,#9e009e 251px,#9e0089 277px,#9e0078 304px)"></i>
<i style="left:85px;top:250px;width:300px;height:2px;background:linear-gradient(90deg,#001c9e 0px,#000f9e 63px,#34009e 129px,#9e009e 251px,#9e007b 300px)"></i>
<i style="left:86px;top:252px;width:297px;height:2px;background:linear-gradient(90deg,#001b9e 0px,#000e9e 63px,#32009e 126px,#9e009e 252px,#9e007d 297px)"></i>
<i style="left:87px;top:254px;width:294px;height:2px;background:linear-gradient(90deg,#001a9e 0px,#000d9e 62px,#30009e 123px,#9e009e 253px,#9e0080 294px)"></i>
<i style="left:88px;top:256px;width:291px;height:2px;background:linear-gradient(90deg,#00199e 0px,#000d9e 61px,#2d009e 120px,#9e009e 254px,#9e0083 291px)"></i>
<i style="left:90px;top:258px;width:287px;height:2px;background:linear-gradient(90deg,#00189e 0px,#000c9e 60px,#2b009e 116px,#9e009e 254px,#9e0085 287px)"></i>
<i style="left:91px;top:260px;width:284px;height:2px;background:linear-gradient(90deg,#00189e 0px,#000c9e 59px,#29009e 113px,#9e009e 255px,#9e0088 284px)"></i>
<i style="left:92px;top:262px;width:281px;height:2px;background:linear-gradient(90deg,#00179e 0px,#010b9e 59px,#28009e 111px,#9e009e 256px,#9e008b 281px)"></i>
<i style="left:93px;top:264px;width:278px;height:2px;background:linear-gradient(90deg,#00169e 0px,#000a9e 58px,#25009e 108px,#9e009e 257px,#9e008e 278px)"></i>
<i style="left:95px;top:266px;width:274px;height:2px;background:linear-gradient(90deg,#00159e 0px,#000a9e 56px,#23009e 104px,#9e009e 257px,#9e0091 274px)"></i>
<i style="left:96px;top:268px;width:271px;height:2px;background:linear-gradient(90deg,#00149e 0px,#01099e 56px,#21009e 101px,#5f009e 181px,#9e009e 258px,#9e0094 271px)"></i>
<i style="left:97px;top:270px;width:268px;height:2px;background:linear-gradient(90deg,#00149e 0px,#00099e 55px,#1f009e 98px,#5e009e 180px,#9e009e 259px,#9e0097 268px)"></i>
<i style="left:99px;top:272px;width:264px;height:2px;background:linear-gradient(90deg,#00139e 0px,#00089e 53px,#1d009e 94px,#5d009e 178px,#9e009e 259px,#9e009a 264px)"></i>
<i style="left:100px;top:274px;width:261px;height:2px;background:linear-gradient(90deg,#00129e 0px,#01089e 53px,#1c009e 91px,#59009e 174px,#9e009e 261px)"></i>
<i style="left:101px;top:276px;width:258px;height:2px;background:linear-gradient(90deg,#00119e 0px,#00079e 52px,#1a009e 88px,#59009e 174px,#9b009e 258px)"></i>
<i style="left:103px;top:278px;width:255px;height:2px;background:linear-gradient(90deg,#00109e 0px,#00079e 50px,#18009e 84px,#57009e 171px,#99009e 255px)"></i>
<i style="left:104px;top:280px;width:252px;height:2px;background:linear-gradient(90deg,#00109e 0px,#01069e 50px,#16009e 81px,#55009e 168px,#96009e 252px)"></i>
<i style="left:105px;top:282px;width:249px;height:2px;background:linear-gradient(90deg,#000f9e 0px,#00069e 49px,#14009e 78px,#52009e 165px,#93009e 249px)"></i>
<i style="left:107px;top:284px;width:245px;height:2px;background:linear-gradient(90deg,#000e9e 0px,#00059e 47px,#12009e 74px,#50009e 161px,#8f009e 245px)"></i>
<i style="left:108px;top:286px;width:242px;height:2px;background:linear-gradient(90deg,#000d9e 0px,#01059e 47px,#11009e 71px,#4e009e 158px,#8d009e 242px)"></i>
<i style="left:109px;top:288px;width:239px;height:2px;background:linear-gradient(90deg,#000d9e 0px,#00049e 46px,#0f009e 68px,#8a009e 239px)"></i>
<i style="left:111px;top:290px;width:235px;height:2px;background:linear-gradient(90deg,#000c9e 0px,#00049e 44px,#0d009e 64px,#87009e 235px)"></i>
<i style="left:112px;top:292px;width:232px;height:2px;background:linear-gradient(90deg,#000b9e 0px,#00039e 43px,#0c009e 61px,#84009e 232px)"></i>
<i style="left:114px;top:294px;width:228px;height:2px;background:linear-gradient(90deg,#000a9e 0px,#00039e 42px,#0a009e 57px,#81009e 228px)"></i>
<i style="left:115px;top:296px;width:225px;height:2px;background:linear-gradient(90deg,#000a9e 0px,#00029e 41px,#09009e 54px,#7e009e 225px)"></i>
<i style="left:116px;top:298px;width:222px;height:2px;background:linear-gradient(90deg,#00099e 0px,#00029e 40px,#3c009e 132px,#7c009e 222px)"></i>
<i style="left:118px;top:300px;width:218px;height:2px;background:linear-gradient(90deg,#00089e 0px,#00019e 39px,#79009e 218px)"></i>
<i style="left:119px;top:302px;width:215px;height:2px;background:linear-gradient(90deg,#00089e 0px,#00019e 38px,#76009e 215px)"></i>
<i style="left:121px;top:304px;width:211px;height:2px;background:linear-gradient(90deg,#00079e 0px,#00019e 36px,#74009e 211px)"></i>
<i style="left:122px;top:306px;width:208px;height:2px;background:linear-gradient(90deg,#00079e 0px,#00009e 36px,#71009e 208px)"></i>
<i style="left:124px;top:308px;width:204px;height:2px;background:linear-gradient(90deg,#00069e 0px,#00009e 34px,#6f009e 204px)"></i>
<i style="left:125px;top:310px;width:201px;height:2px;background:linear-gradient(90deg,#00059e 0px,#00009e 33px,#6c009e 201px)"></i>
<i style="left:127px;top:312px;width:198px;height:2px;background:linear-gradient(90deg,#00059e 0px,#00009e 32px,#6b009e 198px)"></i>
<i style="left:128px;top:314px;width:195px;height:2px;background:linear-gradient(90deg,#00049e 0px,#00009e 31px,#68009e 195px)"></i>
<i style="left:130px;top:316px;width:191px;height:2px;background:linear-gradient(90deg,#00039e 0px,#00009e 29px,#66009e 191px)"></i>
<i style="left:131px;top:318px;width:188px;height:2px;background:linear-gradient(90deg,#00039e 0px,#00009e 29px,#64009e 188px)"></i>
<i style="left:133px;top:320px;width:184px;height:2px;background:linear-gradient(90deg,#00029e 0px,#00009e 27px,#62009e 184px)"></i>
<i style="left:135px;top:322px;width:180px;height:2px;background:linear-gradient(90deg,#00019e 0px,#00009e 25px,#5f009e 180px)"></i>
<i style="left:136px;top:324px;width:177px;height:2px;background:linear-gradient(90deg,#00019e 0px,#00009e 25px,#5d009e 177px)"></i>
<i style="left:138px;top:326px;width:173px;height:2px;background:linear-gradient(90deg,#00009e 0px,#00009e 23px,#5b009e 173px)"></i>
<i style="left:140px;top:328px;width:169px;height:2px;background:linear-gradient(90deg,#00009e 0px,#00009e 21px,#59009e 169px)"></i>
<i style="left:141px;top:330px;width:166px;height:2px;background:linear-gradient(90deg,#00009e 0px,#00009e 21px,#57009e 166px)"></i>
<i style="left:143px;top:332px;width:162px;height:2px;background:linear-gradient(90deg,#00009e 0px,#00009e 19px,#55009e 162px)"></i>
<i style="left:145px;top:334px;width:158px;height:2px;background:linear-gradient(90deg,#00009e 0px,#00009e 17px,#53009e 158px)"></i>
<i style="left:146px;top:336px;width:155px;height:2px;background:linear-gradient(90deg,#00009e 0px,#00009e 17px,#51009e 155px)"></i>
<i style="left:148px;top:338px;width:151px;height:2px;background:linear-gradient(90deg,#00009e 0px,#00009e 15px,#4f009e 151px)"></i>
<i style="left:150px;top:340px;width:147px;height:2px;background:linear-gradient(90deg,#00009e 0px,#00009e 13px,#4d009e 147px)"></i>
<i style="left:152px;top:342px;width:143px;height:2px;background:linear-gradient(90deg,#00009e 0px,#00009e 12px,#4b009e 143px)"></i>
<i style="left:153px;top:344px;width:140px;height:2px;background:linear-gradient(90deg,#00009e 0px,#00009e 11px,#49009e 140px)"></i>
<i style="left:155px;top:346px;width:137px;height:2px;background:linear-gradient(90deg,#00009e 0px,#00009e 9px,#48009e 137px)"></i>
<i style="left:157px;top:348px;width:133px;height:2px;background:linear-gradient(90deg,#00009e 0px,#00009e 8px,#46009e 133px)"></i>
<i style="left:159px;top:350px;width:129px;height:2px;background:linear-gradient(90deg,#00009e 0px,#00009e 6px,#44009e 129px)"></i>
<i style="left:161px;top:352px;width:125px;height:2px;background:linear-gradient(90deg,#00009e 0px,#05009e 13px,#43009e 125px)"></i>
<i style="left:163px;top:354px;width:121px;height:2px;background:linear-gradient(90deg,#00009e 0px,#41009e 121px)"></i>
<i style="left:165px;top:356px;width:117px;height:2px;background:linear-gradient(90deg,#00009e 0px,#3f009e 117px)"></i>
<i style="left:167px;top:358px;width:113px;height:2px;background:linear-gradient(90deg,#01009e 0px,#3e009e 113px)"></i>
<i style="left:170px;top:360px;width:108px;height:2px;background:linear-gradient(90deg,#02009e 0px,#3c009e 108px)"></i>
<i style="left:172px;top:362px;width:104px;height:2px;background:linear-gradient(90deg,#03009e 0px,#3a009e 104px)"></i>
<i style="left:174px;top:364px;width:100px;height:2px;background:linear-gradient(90deg,#04009e 0px,#39009e 100px)"></i>
<i style="left:176px;top:366px;width:96px;height:2px;background:linear-gradient(90deg,#05009e 0px,#37009e 96px)"></i>
<i style="left:178px;top:368px;width:92px;height:2px;background:linear-gradient(90deg,#05009e 0px,#35009e 92px)"></i>
<i style="left:181px;top:370px;width:87px;height:2px;background:linear-gradient(90deg,#07009e 0px,#34009e 87px)"></i>
<i style="left:183px;top:372px;width:83px;height:2px;background:linear-gradient(90deg,#08009e 0px,#32009e 83px)"></i>
<i style="left:185px;top:374px;width:79px;height:2px;background:linear-gradient(90deg,#08009e 0px,#31009e 79px)"></i>
<i style="left:188px;top:376px;width:74px;height:2px;background:linear-gradient(90deg,#0a009e 0px,#2f009e 74px)"></i>
<i style="left:190px;top:378px;width:70px;height:2px;background:linear-gradient(90deg,#0a009e 0px,#2e009e 70px)"></i>
<i style="left:193px;top:380px;width:66px;height:2px;background:linear-gradient(90deg,#0c009e 0px,#2d009e 66px)"></i>
<i style="left:195px;top:382px;width:62px;height:2px;background:linear-gradient(90deg,#0c009e 0px,#2b009e 62px)"></i>
<i style="left:198px;top:384px;width:57px;height:2px;background:linear-gradient(90deg,#0e009e 0px,#2a009e 57px)"></i>
<i style="left:200px;top:386px;width:53px;height:2px;background:linear-gradient(90deg,#0e009e 0px,#29009e 53px)"></i>
<i style="left:202px;top:388px;width:49px;height:2px;background:linear-gradient(90deg,#0f009e 0px,#27009e 49px)"></i>
<i style="left:205px;top:390px;width:44px;height:2px;background:linear-gradient(90deg,#10009e 0px,#26009e 44px)"></i>
<i style="left:207px;top:392px;width:40px;height:2px;background:linear-gradient(90deg,#11009e 0px,#25009e 40px)"></i>
<i style="left:210px;top:394px;width:35px;height:2px;background:linear-gradient(90deg,#12009e 0px,#23009e 35px)"></i>
<i style="left:212px;top:396px;width:31px;height:2px;background:linear-gradient(90deg,#13009e 0px,#22009e 31px)"></i>
<i style="left:214px;top:398px;width:27px;height:2px;background:linear-gradient(90deg,#14009e 0px,#21009e 27px)"></i>
<i style="left:217px;top:400px;width:22px;height:2px;background:linear-gradient(90deg,#15009e 0px,#1f009e 22px)"></i>
<i style="left:219px;top:402px;width:18px;height:2px;background:linear-gradient(90deg,#15009e 0px,#1e009e 18px)"></i>
<i style="left:222px;top:404px;width:13px;height:2px;background:linear-gradient(90deg,#17009e 0px,#1d009e 13px)"></i>
<i style="left:225px;top:406px;width:8px;height:2px;background:linear-gradient(90deg,#18009e 0px,#1b009e 8px)"></i>
</div><div class="lay" style="clip-path:polygon(405.7px 55.2px,112.2px 27.7px,157.6px 308.6px)">
<i style="left:111px;top:26px;width:6px;height:2px;background:linear-gradient(90deg,#0f0 0px,#0f0 1px,#0eff00 6px)"></i>
<i style="left:111px;top:28px;width:27px;height:2px;background:linear-gradient(90deg,#00ff04 0px,#02ff03 2px,#0dff02 6px,#4dff00 27px)"></i>
<i style="left:111px;top:30px;width:48px;height:2px;background:linear-gradient(90deg,#00ff09 0px,#01ff08 2px,#36ff04 20px,#64ff01 34px,#97ff00 48px)"></i>
<i style="left:111px;top:32px;width:70px;height:2px;background:linear-gradient(90deg,#00ff0e 0px,#00ff0e 2px,#14ff0c 9px,#64ff06 34px,#abff01 53px,#f4ff00 70px)"></i>
<i style="left:112px;top:34px;width:90px;height:2px;background:linear-gradient(90deg,#00ff13 0px,#02ff13 2px,#25ff10 14px,#6eff0c 36px,#b3ff07 54px,#feff02 71px,#ffd700 81px,#ffba00 90px)"></i>
<i style="left:112px;top:36px;width:111px;height:2px;background:linear-gradient(90deg,#00ff19 0px,#01ff18 2px,#1eff16 12px,#6bff12 35px,#b4ff0e 54px,#ffff09 71px,#ffda05 80px,#ffbc03 89px,#ffa100 99px,#ff8700 111px)"></i>
<i style="left:112px;top:38px;width:133px;height:2px;background:linear-gradient(90deg,#00ff1e 0px,#00ff1e 2px,#18ff1c 10px,#67ff18 34px,#b0ff14 53px,#fffe10 71px,#ffce0a 83px,#ffa506 97px,#ff8101 114px,#ff6300 133px)"></i>
<i style="left:113px;top:40px;width:153px;height:2px;background:linear-gradient(90deg,#00ff23 0px,#02ff23 2px,#20ff22 12px,#6aff1e 34px,#acff1b 51px,#fffe17 70px,#ffdf13 77px,#ffc30f 85px,#ffa90b 94px,#ff9308 103px,#ff7e05 114px,#ff6b03 126px,#ff4b00 153px)"></i>
<i style="left:113px;top:42px;width:175px;height:2px;background:linear-gradient(90deg,#00ff29 0px,#01ff29 2px,#1cff28 11px,#6aff25 34px,#acff22 51px,#fdff1e 69px,#fffd1e 70px,#ffda19 78px,#ffb913 88px,#ff9b0e 99px,#ff820a 111px,#ff6d07 124px,#ff5904 139px,#ff3700 175px)"></i>
<i style="left:113px;top:44px;width:196px;height:2px;background:linear-gradient(90deg,#00ff2f 0px,#00ff2f 2px,#15ff2e 9px,#66ff2b 33px,#a4ff29 49px,#fdff26 69px,#fffc25 70px,#ffd61e 79px,#ffb218 90px,#ff9112 103px,#ff770d 117px,#ff5f09 133px,#ff4b05 151px,#ff3902 172px,#ff2800 196px)"></i>
<i style="left:114px;top:46px;width:216px;height:2px;background:linear-gradient(90deg,#00ff34 0px,#02ff34 2px,#24ff33 13px,#6dff31 34px,#b5ff2f 52px,#feff2d 68px,#ffd124 79px,#ffab1c 91px,#ff8a15 105px,#ff6e0f 121px,#ff550a 140px,#ff3f06 162px,#ff2d02 187px,#ff1d00 216px)"></i>
<i style="left:114px;top:48px;width:238px;height:2px;background:linear-gradient(90deg,#00ff3a 0px,#01ff3a 2px,#1dff3a 11px,#6cff38 34px,#b1ff36 51px,#ffff35 68px,#ffe42e 74px,#ffcc29 80px,#ffa520 93px,#ff8118 109px,#ff6411 127px,#ff4a0c 149px,#ff3507 174px,#ff2302 203px,#ff1300 238px)"></i>
<i style="left:114px;top:50px;width:259px;height:2px;background:linear-gradient(90deg,#00ff40 0px,#00ff40 2px,#16ff40 9px,#68ff3f 33px,#adff3e 50px,#fffe3c 68px,#ffe335 74px,#ffcb2f 80px,#ff9f24 95px,#ff7b1b 112px,#ff5d14 132px,#ff430d 156px,#ff2d07 185px,#ff1a03 219px,#ff0b00 259px)"></i>
<i style="left:115px;top:52px;width:279px;height:2px;background:linear-gradient(90deg,#00ff46 0px,#02ff46 2px,#22ff46 12px,#6cff45 33px,#adff45 49px,#fcff44 66px,#fffd44 67px,#ffe23c 73px,#ffc735 80px,#ff9b29 95px,#ff751e 114px,#ff5616 136px,#ff3b0e 163px,#ff2508 195px,#ff1303 233px,#ff0400 279px)"></i>
<i style="left:115px;top:54px;width:292px;height:2px;background:linear-gradient(90deg,#00ff4c 0px,#01ff4c 2px,#1aff4c 10px,#68ff4c 32px,#a9ff4c 48px,#fdff4c 66px,#fffc4b 67px,#ffe143 73px,#ffc63b 80px,#ffad34 88px,#ff982d 96px,#ff7222 115px,#ff5118 139px,#ff3610 168px,#ff210a 202px,#ff0e04 244px,#f00 292px)"></i>
<i style="left:115px;top:56px;width:291px;height:2px;background:linear-gradient(90deg,#00ff53 0px,#00ff53 2px,#13ff53 8px,#64ff53 31px,#a5ff54 47px,#feff54 66px,#fffb53 67px,#ffe04a 73px,#ffc541 80px,#ffac39 88px,#ff9732 96px,#ff7126 115px,#ff501c 139px,#ff3613 168px,#ff200c 202px,#ff0e06 244px,#ff0001 291px)"></i>
<i style="left:116px;top:58px;width:288px;height:2px;background:linear-gradient(90deg,#00ff59 0px,#02ff59 2px,#23ff59 12px,#6fff5a 33px,#b7ff5b 50px,#ffff5c 65px,#ffe353 71px,#ffc749 78px,#ffae40 86px,#ff9839 94px,#ff722b 113px,#ff5120 137px,#ff3616 165px,#ff200f 199px,#ff0e08 241px,#ff0003 288px)"></i>
<i style="left:116px;top:60px;width:287px;height:2px;background:linear-gradient(90deg,#00ff5f 0px,#01ff5f 2px,#1fff60 11px,#6bff62 32px,#aeff63 48px,#fffe64 65px,#ffe25a 71px,#ffc64f 78px,#ffad46 86px,#ff973e 94px,#ff7130 113px,#ff5124 136px,#ff361a 164px,#ff2011 198px,#ff0d0a 241px,#ff0005 287px)"></i>
<i style="left:116px;top:62px;width:285px;height:2px;background:linear-gradient(90deg,#0f6 0px,#0f6 2px,#14ff66 8px,#66ff69 31px,#aaff6b 47px,#fffd6c 65px,#ffe161 71px,#ffc556 78px,#ffac4c 86px,#ff9643 94px,#ff7034 113px,#ff5027 136px,#ff361d 164px,#ff2014 198px,#ff0d0c 240px,#ff0007 285px)"></i>
<i style="left:117px;top:64px;width:282px;height:2px;background:linear-gradient(90deg,#00ff6c 0px,#03ff6d 2px,#20ff6e 11px,#6aff70 31px,#aaff73 46px,#fdff76 63px,#fffc74 64px,#ffe068 70px,#ffc45d 77px,#ffaa52 85px,#ff9549 93px,#ff6f38 112px,#ff502b 134px,#ff3620 162px,#ff2017 195px,#ff0d0f 237px,#ff0009 282px)"></i>
<i style="left:117px;top:66px;width:280px;height:2px;background:linear-gradient(90deg,#00ff73 0px,#02ff73 2px,#19ff74 9px,#66ff78 30px,#a5ff7b 45px,#feff7e 63px,#fffb7d 64px,#ffdf70 70px,#ffc363 77px,#ffa958 85px,#ff944e 93px,#ff6e3d 112px,#ff502f 134px,#ff3623 161px,#ff2019 194px,#ff0d11 236px,#ff000b 280px)"></i>
<i style="left:117px;top:68px;width:278px;height:2px;background:linear-gradient(90deg,#00ff7a 0px,#01ff7a 2px,#18ff7b 9px,#69ff80 31px,#b3ff83 48px,#ffff87 63px,#ffe279 69px,#ffc66c 76px,#ffae61 83px,#ff9856 91px,#ff7043 110px,#ff5134 132px,#ff3627 159px,#ff201c 192px,#ff0d13 234px,#ff000d 278px)"></i>
<i style="left:118px;top:70px;width:275px;height:2px;background:linear-gradient(90deg,#00ff81 0px,#03ff81 2px,#25ff83 12px,#6dff88 31px,#b4ff8c 47px,#fffe90 62px,#ffe181 68px,#ffc573 75px,#ffad67 82px,#ff975c 90px,#ff7148 108px,#ff5138 130px,#ff362b 157px,#ff201f 190px,#ff0d16 231px,#ff000f 275px)"></i>
<i style="left:118px;top:72px;width:273px;height:2px;background:linear-gradient(90deg,#0f8 0px,#02ff88 2px,#1dff8a 10px,#69ff8f 30px,#abff94 45px,#fffd99 62px,#ffe089 68px,#ffc47a 75px,#ffac6d 82px,#ff9661 90px,#ff704d 108px,#ff503c 130px,#ff362e 157px,#ff2022 189px,#ff0d18 230px,#f01 273px)"></i>
<i style="left:118px;top:74px;width:271px;height:2px;background:linear-gradient(90deg,#00ff8f 0px,#01ff90 2px,#12ff91 7px,#64ff97 29px,#a6ff9c 44px,#fcffa3 61px,#fffca1 62px,#ffdf91 68px,#ffc683 74px,#ffae75 81px,#ff9768 89px,#ff7153 107px,#ff5141 129px,#ff3631 156px,#ff2025 188px,#ff0d1b 228px,#ff0013 271px)"></i>
<i style="left:118px;top:76px;width:269px;height:2px;background:linear-gradient(90deg,#00ff96 0px,#00ff97 2px,#0aff98 5px,#60ff9f 28px,#a2ffa4 43px,#fdffac 61px,#fffbaa 62px,#ffde99 68px,#ffc58a 74px,#ffad7c 81px,#ff966e 89px,#ff7058 107px,#ff5045 129px,#ff3635 155px,#ff2028 187px,#ff0d1d 227px,#ff0015 269px)"></i>
<i style="left:119px;top:78px;width:266px;height:2px;background:linear-gradient(90deg,#00ff9e 0px,#02ff9f 2px,#1effa1 10px,#6cffa8 30px,#b5ffaf 46px,#feffb6 60px,#ffe1a3 66px,#ffc894 72px,#ffaf84 79px,#ff9876 87px,#ff715d 105px,#ff514a 126px,#ff3639 152px,#ff202b 184px,#ff0d20 224px,#ff0017 266px)"></i>
<i style="left:119px;top:80px;width:264px;height:2px;background:linear-gradient(90deg,#00ffa5 0px,#01ffa6 2px,#16ffa8 8px,#67ffb0 29px,#b0ffb8 45px,#ffffc0 60px,#ffe0ac 66px,#ffc79b 72px,#ffae8b 79px,#ff977c 87px,#ff7062 105px,#ff504e 126px,#ff363d 152px,#ff202e 183px,#ff0d22 222px,#ff0019 264px)"></i>
<i style="left:119px;top:82px;width:262px;height:2px;background:linear-gradient(90deg,#00ffad 0px,#00ffae 2px,#0effaf 6px,#63ffb9 28px,#acffc1 44px,#fffec9 60px,#ffdfb4 66px,#ffc5a3 72px,#ffad92 79px,#ff9884 86px,#ff7069 104px,#ff5153 125px,#ff3641 151px,#ff2032 182px,#ff0d25 221px,#ff001b 262px)"></i>
<i style="left:120px;top:84px;width:259px;height:2px;background:linear-gradient(90deg,#00ffb5 0px,#02ffb6 2px,#1bffb9 9px,#67ffc2 28px,#a7ffca 42px,#fcffd4 58px,#fffdd2 59px,#ffdebc 65px,#ffc4aa 71px,#ffac99 78px,#ff978a 85px,#ff716f 102px,#ff5158 123px,#ff3745 148px,#ff2035 179px,#ff0d28 218px,#ff001e 259px)"></i>
<i style="left:120px;top:86px;width:257px;height:2px;background:linear-gradient(90deg,#00ffbd 0px,#01ffbe 2px,#0fffc0 6px,#62ffca 27px,#a2ffd2 41px,#fdffde 58px,#fffbdc 59px,#ffddc5 65px,#ffc3b2 71px,#ffaa9f 78px,#ff9690 85px,#ff7074 102px,#ff505c 123px,#ff3648 148px,#ff2038 178px,#ff0d2a 216px,#ff0020 257px)"></i>
<i style="left:120px;top:88px;width:255px;height:2px;background:linear-gradient(90deg,#00ffc5 0px,#00ffc6 2px,#07ffc7 4px,#30ffcd 15px,#5dffd3 26px,#acffde 43px,#feffe9 58px,#fffae5 59px,#ffdbcd 65px,#ffc2b9 71px,#ffa9a6 78px,#ff9596 85px,#ff6f79 102px,#ff5061 122px,#ff364d 147px,#ff203c 177px,#ff0d2d 215px,#f02 255px)"></i>
<i style="left:121px;top:90px;width:252px;height:2px;background:linear-gradient(90deg,#00ffce 0px,#02ffcf 2px,#1cffd2 9px,#6affde 28px,#b2ffe8 43px,#fffff4 57px,#ffdfda 63px,#ffc5c4 69px,#ffabb0 76px,#ff969f 83px,#ff7080 100px,#ff5066 120px,#ff3651 145px,#ff203f 175px,#ff0d30 212px,#ff0025 252px)"></i>
<i style="left:121px;top:92px;width:250px;height:2px;background:linear-gradient(90deg,#00ffd6 0px,#01ffd7 2px,#13ffda 7px,#65ffe7 27px,#adfff2 42px,#fffefe 57px,#ffe3e7 62px,#ffc8d0 68px,#ffadba 75px,#ff98a8 82px,#ff7187 99px,#ff516c 119px,#ff3756 143px,#ff2043 173px,#ff0d33 210px,#ff0027 250px)"></i>
<i style="left:121px;top:94px;width:248px;height:2px;background:linear-gradient(90deg,#00ffde 0px,#00ffdf 2px,#03ffe0 3px,#53ffed 23px,#85fff6 34px,#bdffff 45px,#fff1fe 59px,#ffd8e7 64px,#ffbed1 70px,#ffa6bb 77px,#ff91aa 84px,#ff6c89 101px,#ff4d6e 121px,#ff3458 145px,#ff1f45 174px,#ff0d35 210px,#ff002a 248px)"></i>
<i style="left:122px;top:96px;width:245px;height:2px;background:linear-gradient(90deg,#00ffe7 0px,#02ffe9 2px,#29ffef 12px,#80ffff 32px,#ffe5fe 60px,#ffcee8 65px,#ffb6d2 71px,#ff8bab 85px,#ff698c 101px,#ff4b71 121px,#ff325a 145px,#ff1e48 173px,#ff0c38 208px,#ff002c 245px)"></i>
<i style="left:122px;top:98px;width:243px;height:2px;background:linear-gradient(90deg,#00fff0 0px,#01fff1 2px,#49ffff 20px,#99efff 39px,#ffdafe 62px,#ffadd3 73px,#ff85ad 87px,#ff648e 103px,#ff4773 123px,#ff305d 146px,#ff1d4a 174px,#ff0c3a 208px,#ff002f 243px)"></i>
<i style="left:122px;top:100px;width:241px;height:2px;background:linear-gradient(90deg,#00fff9 0px,#00fffa 2px,#17ffff 8px,#46f6ff 20px,#98e5ff 40px,#ffd0fe 64px,#ffa5d4 75px,#ff7faf 89px,#ff6090 105px,#ff4576 124px,#ff2f60 147px,#ff1c4d 174px,#ff0b3d 207px,#ff0031 241px)"></i>
<i style="left:123px;top:102px;width:238px;height:2px;background:linear-gradient(90deg,#00fbff 0px,#02faff 2px,#56e9ff 24px,#ffc6fe 65px,#ff9ed5 76px,#ff79b0 90px,#ff5b92 106px,#ff4379 124px,#ff2e63 146px,#ff1b50 173px,#ff0b40 205px,#ff0034 238px)"></i>
<i style="left:123px;top:104px;width:236px;height:2px;background:linear-gradient(90deg,#00f3ff 0px,#01f1ff 2px,#53e0ff 24px,#ffbcfe 67px,#ff96d6 78px,#ff76b4 91px,#ff5995 107px,#ff417c 125px,#ff2c66 147px,#ff1b54 172px,#ff0b43 204px,#ff0037 236px)"></i>
<i style="left:123px;top:106px;width:234px;height:2px;background:linear-gradient(90deg,#00ebff 0px,#00e9ff 2px,#4cd9ff 23px,#9bc9ff 44px,#ffb3fe 69px,#ff8dd4 81px,#ff6eb3 94px,#ff5597 109px,#ff3e7e 127px,#ff2a69 148px,#ff1a57 172px,#ff0b46 203px,#ff003a 234px)"></i>
<i style="left:124px;top:108px;width:232px;height:2px;background:linear-gradient(90deg,#00e2ff 0px,#02e1ff 2px,#5bceff 27px,#ffaafe 70px,#ff89d8 81px,#ff6bb7 94px,#ff529a 109px,#ff3c81 127px,#ff296b 148px,#ff1959 172px,#ff0947 204px,#ff003c 232px)"></i>
<i style="left:124px;top:110px;width:230px;height:2px;background:linear-gradient(90deg,#00dbff 0px,#01d9ff 2px,#57c7ff 27px,#ffa2fe 72px,#ff82d9 83px,#ff66b8 96px,#ff4e9c 111px,#ff3a84 128px,#ff286f 148px,#ff185c 172px,#ff094a 203px,#ff003f 230px)"></i>
<i style="left:124px;top:112px;width:228px;height:2px;background:linear-gradient(90deg,#00d4ff 0px,#00d2ff 2px,#51c1ff 26px,#a2afff 49px,#ff9afe 74px,#ff7cda 85px,#ff61b9 98px,#ff4a9d 113px,#ff3785 130px,#ff2570 150px,#ff175f 172px,#ff094d 202px,#ff0042 228px)"></i>
<i style="left:125px;top:114px;width:225px;height:2px;background:linear-gradient(90deg,#0cf 0px,#02cbff 2px,#5fb7ff 30px,#ff93fe 75px,#ff76da 86px,#ff5dba 99px,#ff48a0 113px,#ff3588 130px,#ff2474 149px,#ff1662 171px,#ff0850 200px,#ff0045 225px)"></i>
<i style="left:125px;top:116px;width:223px;height:2px;background:linear-gradient(90deg,#00c6ff 0px,#01c4ff 2px,#58b1ff 29px,#ff8cfe 77px,#ff71db 88px,#ff5abe 100px,#ff46a3 114px,#ff338b 131px,#ff2376 150px,#ff1565 171px,#ff0048 223px)"></i>
<i style="left:125px;top:118px;width:221px;height:2px;background:linear-gradient(90deg,#00c0ff 0px,#00beff 2px,#55abff 29px,#a49aff 53px,#ff85fe 79px,#ff6bdc 90px,#ff56bf 102px,#ff42a5 116px,#ff318e 132px,#ff227a 150px,#ff1568 171px,#ff004b 221px)"></i>
<i style="left:126px;top:120px;width:218px;height:2px;background:linear-gradient(90deg,#00b9ff 0px,#02b8ff 2px,#62a2ff 33px,#ff7efe 80px,#f6d 91px,#ff51c0 103px,#ff3fa6 117px,#ff2f90 132px,#ff207c 150px,#ff146b 170px,#ff004e 218px)"></i>
<i style="left:126px;top:122px;width:216px;height:2px;background:linear-gradient(90deg,#00b4ff 0px,#01b2ff 2px,#5c9eff 32px,#ff78ff 82px,#ff63e0 92px,#ff4fc3 104px,#ff3ca9 118px,#ff2d93 133px,#ff1f80 150px,#ff136f 169px,#ff0052 216px)"></i>
<i style="left:126px;top:124px;width:214px;height:2px;background:linear-gradient(90deg,#00aeff 0px,#00adff 2px,#5999ff 32px,#a787ff 57px,#ff72ff 84px,#ff5ee1 94px,#ff4bc4 106px,#ff3aac 119px,#ff2b96 134px,#ff1f83 150px,#ff1372 169px,#f05 214px)"></i>
<i style="left:127px;top:126px;width:211px;height:2px;background:linear-gradient(90deg,#00a8ff 0px,#02a7ff 2px,#6590ff 36px,#ff6cff 85px,#ff59e1 95px,#ff47c5 107px,#ff37ad 120px,#ff2998 134px,#ff1d86 150px,#ff1275 168px,#ff0058 211px)"></i>
<i style="left:127px;top:128px;width:209px;height:2px;background:linear-gradient(90deg,#00a4ff 0px,#01a2ff 2px,#5f8cff 35px,#ff67ff 87px,#ff54e2 97px,#ff44c8 108px,#ff35b0 121px,#ff279b 135px,#ff1178 168px,#ff005c 209px)"></i>
<i style="left:127px;top:130px;width:207px;height:2px;background:linear-gradient(90deg,#009fff 0px,#009eff 2px,#5989ff 34px,#a976ff 61px,#ff62ff 89px,#ff50e2 99px,#ff40c9 110px,#ff33b3 122px,#ff269e 136px,#ff107b 168px,#ff005f 207px)"></i>
<i style="left:128px;top:132px;width:204px;height:2px;background:linear-gradient(90deg,#009aff 0px,#0598ff 3px,#6780ff 39px,#ff5cff 90px,#ff4de5 99px,#ff3ecc 110px,#ff30b5 122px,#ff25a2 135px,#ff107f 166px,#ff0063 204px)"></i>
<i style="left:128px;top:134px;width:202px;height:2px;background:linear-gradient(90deg,#0095ff 0px,#0194ff 2px,#627dff 38px,#ff58ff 92px,#ff47e3 102px,#ff3acd 112px,#ff23a4 136px,#ff0f82 166px,#ff0067 202px)"></i>
<i style="left:128px;top:136px;width:200px;height:2px;background:linear-gradient(90deg,#0091ff 0px,#0090ff 2px,#5c7aff 37px,#aa67ff 65px,#ff53ff 94px,#ff45e6 103px,#ff38cf 113px,#ff21a7 137px,#ff0f86 165px,#ff006b 200px)"></i>
<i style="left:129px;top:138px;width:197px;height:2px;background:linear-gradient(90deg,#008cff 0px,#0a89ff 5px,#6a72ff 42px,#ff4eff 95px,#ff41e7 104px,#ff35d0 114px,#ff1fa9 137px,#ff0e89 164px,#ff006f 197px)"></i>
<i style="left:129px;top:140px;width:195px;height:2px;background:linear-gradient(90deg,#0089ff 0px,#0187ff 2px,#646fff 41px,#ff4aff 97px,#ff32d3 115px,#ff1ead 137px,#ff0e8e 163px,#ff0073 195px)"></i>
<i style="left:129px;top:142px;width:193px;height:2px;background:linear-gradient(90deg,#0085ff 0px,#0084ff 2px,#5f6cff 40px,#ff45ff 99px,#ff2fd4 117px,#ff1db0 138px,#ff0d91 163px,#f07 193px)"></i>
<i style="left:129px;top:144px;width:191px;height:2px;background:linear-gradient(90deg,#0081ff 0px,#027fff 3px,#5d69ff 40px,#aa56ff 70px,#ff41ff 101px,#ff2dd6 118px,#ff1bb2 139px,#ff0c94 163px,#ff007b 191px)"></i>
<i style="left:130px;top:146px;width:188px;height:2px;background:linear-gradient(90deg,#007dff 0px,#017cff 2px,#6763ff 44px,#ff3dff 102px,#ff2ad7 119px,#ff1ab6 138px,#ff0b98 161px,#ff007f 188px)"></i>
<i style="left:130px;top:148px;width:186px;height:2px;background:linear-gradient(90deg,#007aff 0px,#0079ff 2px,#6260ff 43px,#ff3aff 104px,#ff28d9 120px,#ff18b8 139px,#ff0b9c 161px,#ff0084 186px)"></i>
<i style="left:130px;top:150px;width:184px;height:2px;background:linear-gradient(90deg,#0076ff 0px,#0275ff 3px,#5d5eff 42px,#ac4aff 74px,#ff36ff 106px,#ff25da 122px,#ff16bb 140px,#ff0aa0 160px,#f08 184px)"></i>
<i style="left:131px;top:152px;width:181px;height:2px;background:linear-gradient(90deg,#0073ff 0px,#0670ff 4px,#6958ff 47px,#ff32ff 107px,#ff23dc 122px,#ff15be 139px,#ff09a3 159px,#ff008d 181px)"></i>
<i style="left:131px;top:154px;width:179px;height:2px;background:linear-gradient(90deg,#0070ff 0px,#016eff 2px,#6456ff 46px,#ff2fff 109px,#ff20dd 124px,#ff14c1 140px,#ff09a8 158px,#ff0092 179px)"></i>
<i style="left:131px;top:156px;width:178px;height:2px;background:linear-gradient(90deg,#006dff 0px,#026bff 3px,#5f53ff 45px,#ad40ff 78px,#ff2bff 111px,#ff1edf 125px,#ff12c3 141px,#ff08ab 158px,#ff0095 178px)"></i>
<i style="left:132px;top:158px;width:175px;height:2px;background:linear-gradient(90deg,#0069ff 0px,#0867ff 5px,#694eff 49px,#ff28ff 112px,#ff1ce2 125px,#ff11c7 140px,#ff07af 157px,#ff009a 175px)"></i>
<i style="left:132px;top:160px;width:173px;height:2px;background:linear-gradient(90deg,#06f 0px,#0165ff 2px,#664cff 49px,#ff25ff 114px,#ff1ae4 126px,#ff10cb 140px,#ff07b4 156px,#ff00a0 173px)"></i>
<i style="left:132px;top:162px;width:171px;height:2px;background:linear-gradient(90deg,#0064ff 0px,#0262ff 3px,#624aff 48px,#f2f 116px,#ff17e5 128px,#ff0ecd 141px,#ff00a5 171px)"></i>
<i style="left:133px;top:164px;width:168px;height:2px;background:linear-gradient(90deg,#0061ff 0px,#0160ff 2px,#0d5cff 8px,#6a45ff 52px,#ff1fff 117px,#ff16e7 128px,#ff0dd1 140px,#f0a 168px)"></i>
<i style="left:133px;top:166px;width:166px;height:2px;background:linear-gradient(90deg,#005eff 0px,#015dff 2px,#6643ff 51px,#ff1cff 119px,#ff0cd3 141px,#ff00b0 166px)"></i>
<i style="left:133px;top:168px;width:164px;height:2px;background:linear-gradient(90deg,#005cff 0px,#025aff 3px,#6441ff 51px,#ff19ff 121px,#ff0bd7 141px,#ff00b6 164px)"></i>
<i style="left:134px;top:170px;width:161px;height:2px;background:linear-gradient(90deg,#0059ff 0px,#0158ff 2px,#1154ff 10px,#6c3cff 55px,#ff16ff 122px,#ff0adb 140px,#f0b 161px)"></i>
<i style="left:134px;top:172px;width:159px;height:2px;background:linear-gradient(90deg,#0056ff 0px,#0454ff 4px,#683bff 54px,#ff13ff 124px,#ff08dd 141px,#ff00c1 159px)"></i>
<i style="left:134px;top:174px;width:157px;height:2px;background:linear-gradient(90deg,#0054ff 0px,#0053ff 2px,#6439ff 53px,#f1f 126px,#ff07e1 141px,#ff00c8 157px)"></i>
<i style="left:135px;top:176px;width:154px;height:2px;background:linear-gradient(90deg,#0051ff 0px,#0150ff 2px,#144cff 12px,#6e34ff 58px,#ff0eff 127px,#ff06e5 140px,#ff00ce 154px)"></i>
<i style="left:135px;top:178px;width:152px;height:2px;background:linear-gradient(90deg,#004fff 0px,#014eff 2px,#084cff 6px,#6a33ff 57px,#ff0cff 129px,#ff00d5 152px)"></i>
<i style="left:135px;top:180px;width:150px;height:2px;background:linear-gradient(90deg,#004dff 0px,#004cff 2px,#6632ff 56px,#ff09ff 131px,#ff00dc 150px)"></i>
<i style="left:136px;top:182px;width:147px;height:2px;background:linear-gradient(90deg,#004bff 0px,#1545ff 13px,#6d2dff 60px,#ff07ff 132px,#ff00e3 147px)"></i>
<i style="left:136px;top:184px;width:145px;height:2px;background:linear-gradient(90deg,#0049ff 0px,#0148ff 2px,#0d45ff 9px,#6b2cff 60px,#ff05ff 134px,#ff00ea 145px)"></i>
<i style="left:136px;top:186px;width:143px;height:2px;background:linear-gradient(90deg,#0047ff 0px,#0245ff 3px,#672bff 59px,#ff03ff 136px,#ff00f2 143px)"></i>
<i style="left:137px;top:188px;width:140px;height:2px;background:linear-gradient(90deg,#0045ff 0px,#183eff 15px,#6f27ff 63px,#f0f 137px,#ff00f9 140px)"></i>
<i style="left:137px;top:190px;width:138px;height:2px;background:linear-gradient(90deg,#0043ff 0px,#0142ff 2px,#0e3eff 10px,#6b26ff 62px,#fd00ff 138px)"></i>
<i style="left:137px;top:192px;width:136px;height:2px;background:linear-gradient(90deg,#0041ff 0px,#0040ff 2px,#6226ff 58px,#f500ff 136px)"></i>
<i style="left:138px;top:194px;width:133px;height:2px;background:linear-gradient(90deg,#003fff 0px,#1439ff 13px,#6523ff 60px,#ed00ff 133px)"></i>
<i style="left:138px;top:196px;width:131px;height:2px;background:linear-gradient(90deg,#003dff 0px,#063bff 5px,#5e23ff 57px,#e600ff 131px)"></i>
<i style="left:138px;top:198px;width:129px;height:2px;background:linear-gradient(90deg,#003bff 0px,#003bff 2px,#5723ff 54px,#de00ff 129px)"></i>
<i style="left:139px;top:200px;width:126px;height:2px;background:linear-gradient(90deg,#0039ff 0px,#0d36ff 9px,#5b20ff 56px,#d700ff 126px)"></i>
<i style="left:139px;top:202px;width:124px;height:2px;background:linear-gradient(90deg,#0038ff 0px,#0137ff 2px,#5421ff 53px,#d000ff 124px)"></i>
<i style="left:139px;top:204px;width:123px;height:2px;background:linear-gradient(90deg,#0036ff 0px,#0036ff 2px,#4e21ff 50px,#cb00ff 123px)"></i>
<i style="left:140px;top:206px;width:120px;height:2px;background:linear-gradient(90deg,#0034ff 0px,#531eff 53px,#c500ff 120px)"></i>
<i style="left:140px;top:208px;width:118px;height:2px;background:linear-gradient(90deg,#03f 0px,#0132ff 2px,#4b1eff 49px,#bf00ff 118px)"></i>
<i style="left:140px;top:210px;width:116px;height:2px;background:linear-gradient(90deg,#0032ff 0px,#0031ff 2px,#431fff 45px,#b800ff 116px)"></i>
<i style="left:140px;top:212px;width:114px;height:2px;background:linear-gradient(90deg,#0030ff 0px,#012fff 3px,#3c1fff 41px,#b200ff 114px)"></i>
<i style="left:141px;top:214px;width:111px;height:2px;background:linear-gradient(90deg,#002eff 0px,#012eff 2px,#411cff 44px,#ac00ff 111px)"></i>
<i style="left:141px;top:216px;width:109px;height:2px;background:linear-gradient(90deg,#002dff 0px,#002cff 2px,#391dff 40px,#a700ff 109px)"></i>
<i style="left:141px;top:218px;width:107px;height:2px;background:linear-gradient(90deg,#002cff 0px,#012bff 3px,#321dff 36px,#a100ff 107px)"></i>
<i style="left:142px;top:220px;width:104px;height:2px;background:linear-gradient(90deg,#002aff 0px,#0129ff 2px,#371aff 39px,#9c00ff 104px)"></i>
<i style="left:142px;top:222px;width:102px;height:2px;background:linear-gradient(90deg,#0029ff 0px,#0028ff 2px,#301bff 35px,#9600ff 102px)"></i>
<i style="left:142px;top:224px;width:100px;height:2px;background:linear-gradient(90deg,#0028ff 0px,#0126ff 3px,#281cff 30px,#9100ff 100px)"></i>
<i style="left:143px;top:226px;width:97px;height:2px;background:linear-gradient(90deg,#0026ff 0px,#3018ff 35px,#8c00ff 97px)"></i>
<i style="left:143px;top:228px;width:95px;height:2px;background:linear-gradient(90deg,#0025ff 0px,#0024ff 2px,#2819ff 30px,#8700ff 95px)"></i>
<i style="left:143px;top:230px;width:93px;height:2px;background:linear-gradient(90deg,#0024ff 0px,#0023ff 2px,#1e1bff 24px,#8200ff 93px)"></i>
<i style="left:144px;top:232px;width:90px;height:2px;background:linear-gradient(90deg,#02f 0px,#2717ff 30px,#7d00ff 90px)"></i>
<i style="left:144px;top:234px;width:88px;height:2px;background:linear-gradient(90deg,#0021ff 0px,#0020ff 2px,#1e18ff 24px,#7900ff 88px)"></i>
<i style="left:144px;top:236px;width:86px;height:2px;background:linear-gradient(90deg,#0020ff 0px,#001fff 2px,#1519ff 18px,#7400ff 86px)"></i>
<i style="left:145px;top:238px;width:83px;height:2px;background:linear-gradient(90deg,#001fff 0px,#1e16ff 24px,#7000ff 83px)"></i>
<i style="left:145px;top:240px;width:81px;height:2px;background:linear-gradient(90deg,#001eff 0px,#1517ff 18px,#6b00ff 81px)"></i>
<i style="left:145px;top:242px;width:79px;height:2px;background:linear-gradient(90deg,#001dff 0px,#001cff 2px,#0d18ff 12px,#6700ff 79px)"></i>
<i style="left:146px;top:244px;width:76px;height:2px;background:linear-gradient(90deg,#001bff 0px,#6300ff 76px)"></i>
<i style="left:146px;top:246px;width:74px;height:2px;background:linear-gradient(90deg,#001aff 0px,#0d16ff 12px,#5f00ff 74px)"></i>
<i style="left:146px;top:248px;width:72px;height:2px;background:linear-gradient(90deg,#0019ff 0px,#0418ff 5px,#5b00ff 72px)"></i>
<i style="left:147px;top:250px;width:69px;height:2px;background:linear-gradient(90deg,#0018ff 0px,#5700ff 69px)"></i>
<i style="left:147px;top:252px;width:68px;height:2px;background:linear-gradient(90deg,#0017ff 0px,#0715ff 7px,#5400ff 68px)"></i>
<i style="left:147px;top:254px;width:66px;height:2px;background:linear-gradient(90deg,#0016ff 0px,#0016ff 2px,#5100ff 66px)"></i>
<i style="left:148px;top:256px;width:63px;height:2px;background:linear-gradient(90deg,#0015ff 0px,#4d00ff 63px)"></i>
<i style="left:148px;top:258px;width:61px;height:2px;background:linear-gradient(90deg,#0014ff 0px,#4900ff 61px)"></i>
<i style="left:148px;top:260px;width:59px;height:2px;background:linear-gradient(90deg,#0013ff 0px,#0013ff 2px,#4600ff 59px)"></i>
<i style="left:149px;top:262px;width:56px;height:2px;background:linear-gradient(90deg,#0012ff 0px,#4200ff 56px)"></i>
<i style="left:149px;top:264px;width:54px;height:2px;background:linear-gradient(90deg,#01f 0px,#3f00ff 54px)"></i>
<i style="left:149px;top:266px;width:52px;height:2px;background:linear-gradient(90deg,#01f 0px,#0010ff 2px,#3b00ff 52px)"></i>
<i style="left:150px;top:268px;width:49px;height:2px;background:linear-gradient(90deg,#000fff 0px,#3800ff 49px)"></i>
<i style="left:150px;top:270px;width:47px;height:2px;background:linear-gradient(90deg,#000fff 0px,#3500ff 47px)"></i>
<i style="left:150px;top:272px;width:45px;height:2px;background:linear-gradient(90deg,#000eff 0px,#000dff 2px,#3200ff 45px)"></i>
<i style="left:151px;top:274px;width:42px;height:2px;background:linear-gradient(90deg,#000dff 0px,#2f00ff 42px)"></i>
<i style="left:151px;top:276px;width:40px;height:2px;background:linear-gradient(90deg,#000cff 0px,#2c00ff 40px)"></i>
<i style="left:151px;top:278px;width:38px;height:2px;background:linear-gradient(90deg,#000bff 0px,#2900ff 38px)"></i>
<i style="left:151px;top:280px;width:36px;height:2px;background:linear-gradient(90deg,#000bff 0px,#010aff 3px,#2600ff 36px)"></i>
<i style="left:152px;top:282px;width:33px;height:2px;background:linear-gradient(90deg,#000aff 0px,#2300ff 33px)"></i>
<i style="left:152px;top:284px;width:31px;height:2px;background:linear-gradient(90deg,#0009ff 0px,#2000ff 31px)"></i>
<i style="left:152px;top:286px;width:29px;height:2px;background:linear-gradient(90deg,#0008ff 0px,#0107ff 3px,#1d00ff 29px)"></i>
<i style="left:153px;top:288px;width:26px;height:2px;background:linear-gradient(90deg,#0007ff 0px,#1a00ff 26px)"></i>
<i style="left:153px;top:290px;width:24px;height:2px;background:linear-gradient(90deg,#0007ff 0px,#1800ff 24px)"></i>
<i style="left:153px;top:292px;width:22px;height:2px;background:linear-gradient(90deg,#0006ff 0px,#1500ff 22px)"></i>
<i style="left:154px;top:294px;width:19px;height:2px;background:linear-gradient(90deg,#0005ff 0px,#1200ff 19px)"></i>
<i style="left:154px;top:296px;width:17px;height:2px;background:linear-gradient(90deg,#0004ff 0px,#1000ff 17px)"></i>
<i style="left:154px;top:298px;width:15px;height:2px;background:linear-gradient(90deg,#0004ff 0px,#0d00ff 15px)"></i>
<i style="left:155px;top:300px;width:13px;height:2px;background:linear-gradient(90deg,#0003ff 0px,#0c00ff 13px)"></i>
<i style="left:155px;top:302px;width:11px;height:2px;background:linear-gradient(90deg,#0002ff 0px,#0900ff 11px)"></i>
<i style="left:155px;top:304px;width:9px;height:2px;background:linear-gradient(90deg,#0002ff 0px,#0700ff 9px)"></i>
<i style="left:156px;top:306px;width:6px;height:2px;background:linear-gradient(90deg,#0001ff 0px,#0500ff 6px)"></i>
<i style="left:156px;top:308px;width:4px;height:2px;background:linear-gradient(90deg,#00f 0px,#0200ff 4px)"></i>
</div></div>
<div class="cie" style="left:632px;top:511px;width:290px;height:169px">
<i style="left:0px;top:0px;width:290px;height:3px;background:linear-gradient(90deg,#8bffd1 0px,#c3ffcf 117px,#ffc 229px,#ffe0b2 290px)"></i>
<i style="left:0px;top:3px;width:290px;height:3px;background:linear-gradient(90deg,#8cffd2 0px,#c4ffd0 116px,#ffffce 226px,#ffdfb3 290px)"></i>
<i style="left:0px;top:6px;width:290px;height:3px;background:linear-gradient(90deg,#8dffd4 0px,#c4ffd2 114px,#ffffd0 223px,#ffddb3 290px)"></i>
<i style="left:0px;top:9px;width:290px;height:3px;background:linear-gradient(90deg,#8effd5 0px,#c5ffd3 113px,#ffffd1 220px,#ffdcb3 290px)"></i>
<i style="left:0px;top:12px;width:290px;height:3px;background:linear-gradient(90deg,#8fffd7 0px,#c6ffd5 111px,#ffffd3 217px,#ffdab3 290px)"></i>
<i style="left:0px;top:15px;width:290px;height:3px;background:linear-gradient(90deg,#90ffd9 0px,#c6ffd7 109px,#ffffd5 214px,#ffd9b4 290px)"></i>
<i style="left:0px;top:18px;width:290px;height:3px;background:linear-gradient(90deg,#92ffda 0px,#c7ffd8 107px,#ffffd7 211px,#ffd7b4 290px)"></i>
<i style="left:0px;top:21px;width:290px;height:3px;background:linear-gradient(90deg,#93ffdc 0px,#c7ffda 105px,#ffffd8 208px,#ffd6b4 290px)"></i>
<i style="left:0px;top:24px;width:290px;height:3px;background:linear-gradient(90deg,#94ffdd 0px,#c8ffdc 104px,#ffffda 204px,#ffd4b5 290px)"></i>
<i style="left:0px;top:27px;width:290px;height:3px;background:linear-gradient(90deg,#95ffdf 0px,#c9ffde 103px,#ffffdc 201px,#ffd3b5 290px)"></i>
<i style="left:0px;top:30px;width:290px;height:3px;background:linear-gradient(90deg,#96ffe1 0px,#c9ffdf 101px,#ffffde 198px,#ffd2b5 290px)"></i>
<i style="left:0px;top:33px;width:290px;height:3px;background:linear-gradient(90deg,#98ffe2 0px,#caffe1 100px,#ffffe0 195px,#ffd0b5 290px)"></i>
<i style="left:0px;top:36px;width:290px;height:3px;background:linear-gradient(90deg,#99ffe4 0px,#cbffe3 98px,#ffffe2 192px,#ffcfb6 290px)"></i>
<i style="left:0px;top:39px;width:290px;height:3px;background:linear-gradient(90deg,#9affe6 0px,#ccffe4 97px,#ffffe3 189px,#ffe5cb 238px,#ffcdb6 290px)"></i>
<i style="left:0px;top:42px;width:290px;height:3px;background:linear-gradient(90deg,#9bffe7 0px,#ccffe6 95px,#ffffe5 186px,#ffe4cd 236px,#ffccb6 290px)"></i>
<i style="left:0px;top:45px;width:290px;height:3px;background:linear-gradient(90deg,#9cffe9 0px,#ccffe8 93px,#ffffe7 183px,#ffe4ce 234px,#ffcab6 290px)"></i>
<i style="left:0px;top:48px;width:290px;height:3px;background:linear-gradient(90deg,#9effeb 0px,#cdffea 92px,#ffffe9 180px,#ffe3cf 232px,#ffc9b7 290px)"></i>
<i style="left:0px;top:51px;width:290px;height:3px;background:linear-gradient(90deg,#9fffec 0px,#ffffeb 177px,#ffe2d0 231px,#ffc8b7 290px)"></i>
<i style="left:0px;top:54px;width:290px;height:3px;background:linear-gradient(90deg,#a0ffee 0px,#ffffed 174px,#ffe1d1 229px,#ffc6b7 290px)"></i>
<i style="left:0px;top:57px;width:290px;height:3px;background:linear-gradient(90deg,#a1fff0 0px,#ffffef 171px,#ffe0d1 228px,#ffc5b8 290px)"></i>
<i style="left:0px;top:60px;width:290px;height:3px;background:linear-gradient(90deg,#a3fff2 0px,#fffff0 168px,#ffe0d3 226px,#ffc3b8 290px)"></i>
<i style="left:0px;top:63px;width:290px;height:3px;background:linear-gradient(90deg,#a4fff3 0px,#fffff2 165px,#ffdfd4 224px,#ffc2b8 290px)"></i>
<i style="left:0px;top:66px;width:290px;height:3px;background:linear-gradient(90deg,#a5fff5 0px,#fffff4 161px,#ffded5 223px,#ffc1b8 290px)"></i>
<i style="left:0px;top:69px;width:290px;height:3px;background:linear-gradient(90deg,#a7fff7 0px,#fffff6 158px,#ffddd5 222px,#ffbfb9 290px)"></i>
<i style="left:0px;top:72px;width:290px;height:3px;background:linear-gradient(90deg,#a8fff9 0px,#fffff8 155px,#ffdcd6 220px,#ffbeb9 290px)"></i>
<i style="left:0px;top:75px;width:290px;height:3px;background:linear-gradient(90deg,#a9fffb 0px,#fffffa 152px,#ffdcd8 218px,#ffbdb9 290px)"></i>
<i style="left:0px;top:78px;width:290px;height:3px;background:linear-gradient(90deg,#abfffc 0px,#fffffc 149px,#ffdbd9 216px,#ffbbb9 290px)"></i>
<i style="left:0px;top:81px;width:290px;height:3px;background:linear-gradient(90deg,#acfffe 0px,#fffffe 146px,#ffdada 214px,#ffbaba 290px)"></i>
<i style="left:0px;top:84px;width:290px;height:3px;background:linear-gradient(90deg,#adfeff 0px,#fffeff 145px,#ffd9da 214px,#ffb9ba 290px)"></i>
<i style="left:0px;top:87px;width:290px;height:3px;background:linear-gradient(90deg,#adfcff 0px,#fffbff 146px,#ffd7da 214px,#ffb7ba 290px)"></i>
<i style="left:0px;top:90px;width:290px;height:3px;background:linear-gradient(90deg,#adfaff 0px,#fff9ff 146px,#ffd6db 214px,#ffb6ba 290px)"></i>
<i style="left:0px;top:93px;width:290px;height:3px;background:linear-gradient(90deg,#adf8ff 0px,#fff8ff 146px,#ffd4db 214px,#ffb5bb 290px)"></i>
<i style="left:0px;top:96px;width:290px;height:3px;background:linear-gradient(90deg,#adf6ff 0px,#fff6ff 146px,#ffd3db 214px,#ffb3bb 290px)"></i>
<i style="left:0px;top:99px;width:290px;height:3px;background:linear-gradient(90deg,#adf5ff 0px,#fff3ff 147px,#ffd1db 214px,#ffb2bb 290px)"></i>
<i style="left:0px;top:102px;width:290px;height:3px;background:linear-gradient(90deg,#adf3ff 0px,#fff2ff 147px,#ffcfdb 214px,#ffb1bb 290px)"></i>
<i style="left:0px;top:105px;width:290px;height:3px;background:linear-gradient(90deg,#aef1ff 0px,#fff0ff 147px,#ffcedc 214px,#ffb0bc 290px)"></i>
<i style="left:0px;top:108px;width:290px;height:3px;background:linear-gradient(90deg,#aeefff 0px,#fef 147px,#ffccdb 215px,#ffaebc 290px)"></i>
<i style="left:0px;top:111px;width:290px;height:3px;background:linear-gradient(90deg,#aeedff 0px,#ffecff 148px,#ffcadc 215px,#ffadbc 290px)"></i>
<i style="left:0px;top:114px;width:290px;height:3px;background:linear-gradient(90deg,#aeecff 0px,#ffeaff 148px,#ffc9dc 215px,#ffacbc 290px)"></i>
<i style="left:0px;top:117px;width:290px;height:3px;background:linear-gradient(90deg,#aeeaff 0px,#ffe8ff 148px,#ffc8dc 215px,#ffaabd 290px)"></i>
<i style="left:0px;top:120px;width:290px;height:3px;background:linear-gradient(90deg,#aee8ff 0px,#ffe6ff 148px,#ffc6dc 215px,#ffa9bd 290px)"></i>
<i style="left:0px;top:123px;width:290px;height:3px;background:linear-gradient(90deg,#aee6ff 0px,#ffe4ff 148px,#ffc4dc 216px,#ffa8bd 290px)"></i>
<i style="left:0px;top:126px;width:290px;height:3px;background:linear-gradient(90deg,#aee5ff 0px,#ffe2ff 149px,#ffc3dc 216px,#ffa7bd 290px)"></i>
<i style="left:0px;top:129px;width:290px;height:3px;background:linear-gradient(90deg,#aee3ff 0px,#ffe1ff 149px,#ffc1dc 216px,#ffa5be 290px)"></i>
<i style="left:0px;top:132px;width:290px;height:3px;background:linear-gradient(90deg,#afe1ff 0px,#ffdfff 149px,#ffc0dc 216px,#ffa4be 290px)"></i>
<i style="left:0px;top:135px;width:290px;height:3px;background:linear-gradient(90deg,#afe0ff 0px,#fdf 149px,#ffbedc 217px,#ffa3be 290px)"></i>
<i style="left:0px;top:138px;width:290px;height:3px;background:linear-gradient(90deg,#afdeff 0px,#ffdbff 150px,#ffbddd 216px,#ffa2be 290px)"></i>
<i style="left:0px;top:141px;width:290px;height:3px;background:linear-gradient(90deg,#afdcff 0px,#ffd9ff 150px,#fbd 216px,#ffa0bf 290px)"></i>
<i style="left:0px;top:144px;width:290px;height:3px;background:linear-gradient(90deg,#afdaff 0px,#ffd8ff 150px,#ffbadd 216px,#ff9fbf 290px)"></i>
<i style="left:0px;top:147px;width:290px;height:3px;background:linear-gradient(90deg,#afd9ff 0px,#ffd6ff 150px,#ffb8dd 217px,#ff9ebf 290px)"></i>
<i style="left:0px;top:150px;width:290px;height:3px;background:linear-gradient(90deg,#afd7ff 0px,#ffd4ff 151px,#ffb7dd 217px,#ff9dbf 290px)"></i>
<i style="left:0px;top:153px;width:290px;height:3px;background:linear-gradient(90deg,#afd5ff 0px,#ffd2ff 151px,#ffb5dd 217px,#ff9cc0 290px)"></i>
<i style="left:0px;top:156px;width:290px;height:3px;background:linear-gradient(90deg,#afd4ff 0px,#ffd1ff 151px,#ffb4de 217px,#ff9ac0 290px)"></i>
<i style="left:0px;top:159px;width:290px;height:3px;background:linear-gradient(90deg,#afd2ff 0px,#ffcfff 151px,#ffb2dd 218px,#ff99c0 290px)"></i>
<i style="left:0px;top:162px;width:290px;height:3px;background:linear-gradient(90deg,#afd1ff 0px,#ffcdff 152px,#ffb1de 217px,#ff98c0 290px)"></i>
<i style="left:0px;top:165px;width:290px;height:3px;background:linear-gradient(90deg,#b0cfff 0px,#ffcbff 152px,#ffb0de 217px,#ff97c1 290px)"></i>
<i style="left:0px;top:168px;width:290px;height:1px;background:linear-gradient(90deg,#b0ceff 0px,#ffcaff 152px,#ffafde 217px,#ff96c1 290px)"></i>
</div>
<svg width="1600" height="758" viewBox="0 0 1600 758">
<rect x="956.4" y="37" width="542.2" height="418.2" fill="none" stroke="#9c9c9c" stroke-width="1.4"/>
<line x1="951" y1="455.2" x2="956.5" y2="455.2" stroke="#ddd" stroke-width="1.3"/>
<text x="950.5" y="461" font-size="13" fill="#e4e4e4" text-anchor="end">0</text>
<line x1="956.5" y1="455.2" x2="956.5" y2="460.2" stroke="#ddd" stroke-width="1.3"/>
<text x="956.5" y="474" font-size="13" fill="#e4e4e4" text-anchor="middle">0</text>
<line x1="951" y1="420.49" x2="956.5" y2="420.49" stroke="#ddd" stroke-width="1.3"/>
<text x="950.5" y="426.29" font-size="13" fill="#e4e4e4" text-anchor="end">0,05</text>
<line x1="1001.57" y1="455.2" x2="1001.57" y2="460.2" stroke="#ddd" stroke-width="1.3"/>
<text x="1001.57" y="474" font-size="13" fill="#e4e4e4" text-anchor="middle">0,05</text>
<line x1="951" y1="385.78" x2="956.5" y2="385.78" stroke="#ddd" stroke-width="1.3"/>
<text x="950.5" y="391.58" font-size="13" fill="#e4e4e4" text-anchor="end">0,1</text>
<line x1="1046.63" y1="455.2" x2="1046.63" y2="460.2" stroke="#ddd" stroke-width="1.3"/>
<text x="1046.63" y="474" font-size="13" fill="#e4e4e4" text-anchor="middle">0,1</text>
<line x1="951" y1="351.07" x2="956.5" y2="351.07" stroke="#ddd" stroke-width="1.3"/>
<text x="950.5" y="356.87" font-size="13" fill="#e4e4e4" text-anchor="end">0,15</text>
<line x1="1091.69" y1="455.2" x2="1091.69" y2="460.2" stroke="#ddd" stroke-width="1.3"/>
<text x="1091.69" y="474" font-size="13" fill="#e4e4e4" text-anchor="middle">0,15</text>
<line x1="951" y1="316.36" x2="956.5" y2="316.36" stroke="#ddd" stroke-width="1.3"/>
<text x="950.5" y="322.16" font-size="13" fill="#e4e4e4" text-anchor="end">0,2</text>
<line x1="1136.76" y1="455.2" x2="1136.76" y2="460.2" stroke="#ddd" stroke-width="1.3"/>
<text x="1136.76" y="474" font-size="13" fill="#e4e4e4" text-anchor="middle">0,2</text>
<line x1="951" y1="281.65" x2="956.5" y2="281.65" stroke="#ddd" stroke-width="1.3"/>
<text x="950.5" y="287.45" font-size="13" fill="#e4e4e4" text-anchor="end">0,25</text>
<line x1="1181.83" y1="455.2" x2="1181.83" y2="460.2" stroke="#ddd" stroke-width="1.3"/>
<text x="1181.83" y="474" font-size="13" fill="#e4e4e4" text-anchor="middle">0,25</text>
<line x1="951" y1="246.94" x2="956.5" y2="246.94" stroke="#ddd" stroke-width="1.3"/>
<text x="950.5" y="252.74" font-size="13" fill="#e4e4e4" text-anchor="end">0,3</text>
<line x1="1226.89" y1="455.2" x2="1226.89" y2="460.2" stroke="#ddd" stroke-width="1.3"/>
<text x="1226.89" y="474" font-size="13" fill="#e4e4e4" text-anchor="middle">0,3</text>
<line x1="951" y1="212.23" x2="956.5" y2="212.23" stroke="#ddd" stroke-width="1.3"/>
<text x="950.5" y="218.03" font-size="13" fill="#e4e4e4" text-anchor="end">0,35</text>
<line x1="1271.95" y1="455.2" x2="1271.95" y2="460.2" stroke="#ddd" stroke-width="1.3"/>
<text x="1271.95" y="474" font-size="13" fill="#e4e4e4" text-anchor="middle">0,35</text>
<line x1="951" y1="177.52" x2="956.5" y2="177.52" stroke="#ddd" stroke-width="1.3"/>
<text x="950.5" y="183.32" font-size="13" fill="#e4e4e4" text-anchor="end">0,4</text>
<line x1="1317.02" y1="455.2" x2="1317.02" y2="460.2" stroke="#ddd" stroke-width="1.3"/>
<text x="1317.02" y="474" font-size="13" fill="#e4e4e4" text-anchor="middle">0,4</text>
<line x1="951" y1="142.81" x2="956.5" y2="142.81" stroke="#ddd" stroke-width="1.3"/>
<text x="950.5" y="148.61" font-size="13" fill="#e4e4e4" text-anchor="end">0,45</text>
<line x1="1362.09" y1="455.2" x2="1362.09" y2="460.2" stroke="#ddd" stroke-width="1.3"/>
<text x="1362.09" y="474" font-size="13" fill="#e4e4e4" text-anchor="middle">0,45</text>
<line x1="951" y1="108.1" x2="956.5" y2="108.1" stroke="#ddd" stroke-width="1.3"/>
<text x="950.5" y="113.9" font-size="13" fill="#e4e4e4" text-anchor="end">0,5</text>
<line x1="1407.15" y1="455.2" x2="1407.15" y2="460.2" stroke="#ddd" stroke-width="1.3"/>
<text x="1407.15" y="474" font-size="13" fill="#e4e4e4" text-anchor="middle">0,5</text>
<line x1="951" y1="73.39" x2="956.5" y2="73.39" stroke="#ddd" stroke-width="1.3"/>
<text x="950.5" y="79.19" font-size="13" fill="#e4e4e4" text-anchor="end">0,55</text>
<line x1="1452.22" y1="455.2" x2="1452.22" y2="460.2" stroke="#ddd" stroke-width="1.3"/>
<text x="1452.22" y="474" font-size="13" fill="#e4e4e4" text-anchor="middle">0,55</text>
<rect x="1062.2" y="57.2" width="11.2" height="11.2" fill="none" stroke="#fff" stroke-width="1.6"/>
<rect x="1134" y="63.1" width="11.2" height="11.2" fill="none" stroke="#fff" stroke-width="1.6"/>
<rect x="1128" y="123.3" width="11.2" height="11.2" fill="none" stroke="#000" stroke-width="1.6"/>
<rect x="1075.2" y="132.4" width="11.2" height="11.2" fill="none" stroke="#fff" stroke-width="1.6"/>
<rect x="1356.5" y="84.9" width="11.2" height="11.2" fill="none" stroke="#fff" stroke-width="1.6"/>
<rect x="1225.4" y="218.9" width="11.2" height="11.2" fill="none" stroke="#fff" stroke-width="1.6"/>
<rect x="1108.5" y="339.2" width="11.2" height="11.2" fill="none" stroke="#fff" stroke-width="1.6"/>
<circle cx="1071.9" cy="63" r="3.6" fill="#10b010" stroke="#0a2a0a" stroke-width="1.4"/>
<circle cx="1140.7" cy="69.9" r="3.6" fill="#c8c814" stroke="#22220a" stroke-width="1.4"/>
<circle cx="1135.6" cy="129" r="3.6" fill="#fff" stroke="#111" stroke-width="1.4"/>
<circle cx="1084.2" cy="138" r="3.6" fill="#18b4b4" stroke="#0a2222" stroke-width="1.4"/>
<circle cx="1368.7" cy="92.1" r="3.6" fill="#c80a0a" stroke="#2a0808" stroke-width="1.4"/>
<circle cx="1227.6" cy="230.3" r="3.6" fill="#d010d0" stroke="#260a26" stroke-width="1.4"/>
<circle cx="1113.4" cy="344.1" r="3.6" fill="#1010c8" stroke="#06062e" stroke-width="1.4"/>
<rect x="1444" y="42" width="50" height="21.4" fill="url(#dd)"/>
<text x="1448" y="59" font-size="15" fill="#eee" textLength="21" lengthAdjust="spacingAndGlyphs">u'v'</text>
<path d="M1481.5 49.5h8l-4 4.4z" fill="#0c0c0c"/>
<text x="1339.6" y="60" font-size="13.2" fill="#fff" textLength="97.9" lengthAdjust="spacingAndGlyphs">Gamut coverage:</text>
<rect x="1281" y="427.7" width="214.6" height="23.3" fill="#2f2f2f"/>
<text x="1282.5" y="445.5" font-size="16.6" fill="#fff" textLength="187.8" lengthAdjust="spacingAndGlyphs" xml:space="preserve">Gamut Coverage:  98,5%</text>
<rect x="631.5" y="510.5" width="290.5" height="169.3" fill="none" stroke="#555" stroke-width="1"/>
<rect x="771.4" y="588.4" width="11.2" height="11.2" fill="#fff" stroke="#111" stroke-width="1.6"/>
<circle cx="785.2" cy="598.7" r="3.6" fill="#fff" stroke="#222" stroke-width="1.2"/>
<circle cx="766.7" cy="613" r="3.6" fill="#bdbdbd" stroke="#333" stroke-width="1.2"/>
<clipPath id="tc"><rect x="936.7" y="498" width="536.8" height="172.6"/></clipPath>
<rect x="935.5" y="496.8" width="554.5" height="191.2" fill="#0a0a0a"/>
<rect x="936.7" y="498" width="552.4" height="189.4" fill="#2b2b2b"/>
<g clip-path="url(#tc)">
<rect x="936.7" y="498" width="540" height="14.6" fill="#333"/><rect x="936.7" y="512.6" width="540" height="14.4" fill="#191919"/>
<text x="1048.15" y="518.6" font-size="14.6" fill="#fff" text-anchor="middle">White</text>
<text x="1110.3" y="518.6" font-size="14.6" fill="#fff" text-anchor="middle">Red</text>
<text x="1172.3" y="518.6" font-size="14.6" fill="#fff" text-anchor="middle">Green</text>
<text x="1234.3" y="518.6" font-size="14.6" fill="#fff" text-anchor="middle">Blue</text>
<text x="1296.1" y="518.6" font-size="14.6" fill="#fff" text-anchor="middle">Cyan</text>
<text x="1359.15" y="518.6" font-size="14.6" fill="#fff" text-anchor="middle">Magenta</text>
<text x="1422.55" y="518.6" font-size="14.6" fill="#fff" text-anchor="middle">Yellow</text>
<text x="1488.85" y="518.6" font-size="14.6" fill="#fff" text-anchor="middle">100W</text>
<rect x="936.7" y="527" width="540" height="26.4" fill="#414141"/>
<text x="947.9" y="545.5" font-size="15" fill="#fff" font-weight="bold">x</text>
<text x="1018.8" y="545.5" font-size="14.8" fill="#f4f4f4" textLength="43.2" lengthAdjust="spacingAndGlyphs">0,3110</text>
<text x="1085.1" y="545.5" font-size="14.8" fill="#f4f4f4" textLength="43.2" lengthAdjust="spacingAndGlyphs">0,6431</text>
<text x="1143.1" y="545.5" font-size="14.8" fill="#f4f4f4" textLength="43.2" lengthAdjust="spacingAndGlyphs">0,3068</text>
<text x="1209.1" y="545.5" font-size="14.8" fill="#f4f4f4" textLength="43.2" lengthAdjust="spacingAndGlyphs">0,1498</text>
<text x="1267.1" y="545.5" font-size="14.8" fill="#f4f4f4" textLength="43.2" lengthAdjust="spacingAndGlyphs">0,2293</text>
<text x="1332.7" y="545.5" font-size="14.8" fill="#f4f4f4" textLength="43.2" lengthAdjust="spacingAndGlyphs">0,3133</text>
<text x="1393.2" y="545.5" font-size="14.8" fill="#f4f4f4" textLength="43.2" lengthAdjust="spacingAndGlyphs">0,4207</text>
<text x="1459.5" y="545.5" font-size="14.8" fill="#f4f4f4" textLength="43.2" lengthAdjust="spacingAndGlyphs">0,3140</text>
<rect x="936.7" y="553.35" width="540" height="26.4" fill="#797979"/>
<text x="947.9" y="571.85" font-size="15" fill="#fff" font-weight="bold">y</text>
<text x="1018.8" y="571.85" font-size="14.8" fill="#f4f4f4" textLength="43.2" lengthAdjust="spacingAndGlyphs">0,3237</text>
<text x="1085.1" y="571.85" font-size="14.8" fill="#f4f4f4" textLength="43.2" lengthAdjust="spacingAndGlyphs">0,3269</text>
<text x="1143.1" y="571.85" font-size="14.8" fill="#f4f4f4" textLength="43.2" lengthAdjust="spacingAndGlyphs">0,5970</text>
<text x="1209.1" y="571.85" font-size="14.8" fill="#f4f4f4" textLength="43.2" lengthAdjust="spacingAndGlyphs">0,0609</text>
<text x="1267.1" y="571.85" font-size="14.8" fill="#f4f4f4" textLength="43.2" lengthAdjust="spacingAndGlyphs">0,3254</text>
<text x="1332.7" y="571.85" font-size="14.8" fill="#f4f4f4" textLength="43.2" lengthAdjust="spacingAndGlyphs">0,1487</text>
<text x="1393.2" y="571.85" font-size="14.8" fill="#f4f4f4" textLength="43.2" lengthAdjust="spacingAndGlyphs">0,5062</text>
<text x="1459.5" y="571.85" font-size="14.8" fill="#f4f4f4" textLength="43.2" lengthAdjust="spacingAndGlyphs">0,3277</text>
<rect x="936.7" y="579.7" width="540" height="26.4" fill="#414141"/>
<text x="947.9" y="598.2" font-size="15" fill="#fff" font-weight="bold">Y</text>
<text x="1018.8" y="598.2" font-size="14.8" fill="#f4f4f4" textLength="58.9" lengthAdjust="spacingAndGlyphs">184,1740</text>
<text x="1085.1" y="598.2" font-size="14.8" fill="#f4f4f4" textLength="51.1" lengthAdjust="spacingAndGlyphs">34,7210</text>
<text x="1143.1" y="598.2" font-size="14.8" fill="#f4f4f4" textLength="58.9" lengthAdjust="spacingAndGlyphs">125,9239</text>
<text x="1209.1" y="598.2" font-size="14.8" fill="#f4f4f4" textLength="51.1" lengthAdjust="spacingAndGlyphs">13,4294</text>
<text x="1267.1" y="598.2" font-size="14.8" fill="#f4f4f4" textLength="58.9" lengthAdjust="spacingAndGlyphs">142,0292</text>
<text x="1332.7" y="598.2" font-size="14.8" fill="#f4f4f4" textLength="51.1" lengthAdjust="spacingAndGlyphs">48,4609</text>
<text x="1393.2" y="598.2" font-size="14.8" fill="#f4f4f4" textLength="58.9" lengthAdjust="spacingAndGlyphs">159,3737</text>
<text x="1459.5" y="598.2" font-size="14.8" fill="#f4f4f4" textLength="58.9" lengthAdjust="spacingAndGlyphs">344,9820</text>
<rect x="936.7" y="606.05" width="540" height="26.4" fill="#797979"/>
<text x="947.9" y="624.55" font-size="15" fill="#fff" font-weight="bold">Target Y</text>
<text x="1018.8" y="624.55" font-size="14.8" fill="#f4f4f4" textLength="58.9" lengthAdjust="spacingAndGlyphs">170,6131</text>
<text x="1085.1" y="624.55" font-size="14.8" fill="#f4f4f4" textLength="51.1" lengthAdjust="spacingAndGlyphs">36,2819</text>
<text x="1143.1" y="624.55" font-size="14.8" fill="#f4f4f4" textLength="58.9" lengthAdjust="spacingAndGlyphs">122,0154</text>
<text x="1209.1" y="624.55" font-size="14.8" fill="#f4f4f4" textLength="51.1" lengthAdjust="spacingAndGlyphs">12,3158</text>
<text x="1267.1" y="624.55" font-size="14.8" fill="#f4f4f4" textLength="58.9" lengthAdjust="spacingAndGlyphs">134,3312</text>
<text x="1332.7" y="624.55" font-size="14.8" fill="#f4f4f4" textLength="51.1" lengthAdjust="spacingAndGlyphs">48,5977</text>
<text x="1393.2" y="624.55" font-size="14.8" fill="#f4f4f4" textLength="58.9" lengthAdjust="spacingAndGlyphs">158,2973</text>
<text x="1459.5" y="624.55" font-size="14.8" fill="#f4f4f4" textLength="58.9" lengthAdjust="spacingAndGlyphs">344,9820</text>
<rect x="936.7" y="632.4" width="540" height="26.4" fill="#414141"/>
<text x="947.9" y="650.9" font-size="15" fill="#fff" font-weight="bold">ΔE 2000</text>
<text x="1018.8" y="650.9" font-size="14.8" fill="#f4f4f4" textLength="43.2" lengthAdjust="spacingAndGlyphs">3,2605</text>
<text x="1085.1" y="650.9" font-size="14.8" fill="#f4f4f4" textLength="43.2" lengthAdjust="spacingAndGlyphs">0,8841</text>
<text x="1143.1" y="650.9" font-size="14.8" fill="#f4f4f4" textLength="43.2" lengthAdjust="spacingAndGlyphs">1,1054</text>
<text x="1209.1" y="650.9" font-size="14.8" fill="#f4f4f4" textLength="43.2" lengthAdjust="spacingAndGlyphs">0,9165</text>
<text x="1267.1" y="650.9" font-size="14.8" fill="#f4f4f4" textLength="43.2" lengthAdjust="spacingAndGlyphs">1,7687</text>
<text x="1332.7" y="650.9" font-size="14.8" fill="#f4f4f4" textLength="43.2" lengthAdjust="spacingAndGlyphs">0,8932</text>
<text x="1393.2" y="650.9" font-size="14.8" fill="#f4f4f4" textLength="43.2" lengthAdjust="spacingAndGlyphs">0,3359</text>
<text x="1459.5" y="650.9" font-size="14.8" fill="#f4f4f4" textLength="43.2" lengthAdjust="spacingAndGlyphs">2,0104</text>
<rect x="936.7" y="658.75" width="540" height="26.4" fill="#797979"/>
<text x="947.9" y="677.25" font-size="15" fill="#fff" font-weight="bold">ΔE ITP</text>
<text x="1018.8" y="677.25" font-size="14.8" fill="#f4f4f4" textLength="43.2" lengthAdjust="spacingAndGlyphs">6,2227</text>
<text x="1085.1" y="677.25" font-size="14.8" fill="#f4f4f4" textLength="43.2" lengthAdjust="spacingAndGlyphs">4,6535</text>
<text x="1143.1" y="677.25" font-size="14.8" fill="#f4f4f4" textLength="43.2" lengthAdjust="spacingAndGlyphs">2,8991</text>
<text x="1209.1" y="677.25" font-size="14.8" fill="#f4f4f4" textLength="43.2" lengthAdjust="spacingAndGlyphs">5,1729</text>
<text x="1267.1" y="677.25" font-size="14.8" fill="#f4f4f4" textLength="43.2" lengthAdjust="spacingAndGlyphs">5,6052</text>
<text x="1332.7" y="677.25" font-size="14.8" fill="#f4f4f4" textLength="43.2" lengthAdjust="spacingAndGlyphs">4,4015</text>
<text x="1393.2" y="677.25" font-size="14.8" fill="#f4f4f4" textLength="43.2" lengthAdjust="spacingAndGlyphs">1,3362</text>
<text x="1459.5" y="677.25" font-size="14.8" fill="#f4f4f4" textLength="43.2" lengthAdjust="spacingAndGlyphs">1,9850</text>
</g>
<rect x="1473.6" y="527" width="14.6" height="144" fill="#4c4c4c"/>
<rect x="1474" y="527.4" width="13.8" height="15.6" rx="2" fill="#686868"/><path d="M1476.5 538.6l4.4-5.4 4.4 5.4z" fill="#2a2a2a"/>
<rect x="1474" y="655" width="13.8" height="15.6" rx="2" fill="#686868"/><path d="M1476.5 659.6l4.4 5.4 4.4-5.4z" fill="#2a2a2a"/>
<rect x="1475.4" y="544.5" width="11" height="90" rx="5" fill="#383838"/>
<rect x="936.7" y="670.6" width="536.9" height="16.8" fill="#4c4c4c"/>
<rect x="937.3" y="671.6" width="13.4" height="15" rx="2" fill="#6a6a6a"/><path d="M947 675l-5.2 4.2 5.2 4.2z" fill="#2a2a2a"/>
<rect x="1460.2" y="671.6" width="13.2" height="15" rx="2" fill="#6a6a6a"/><path d="M1464.4 675l5.2 4.2-5.2 4.2z" fill="#2a2a2a"/>
<rect x="953.4" y="673.6" width="462.6" height="12" rx="6" fill="#393939"/>
<linearGradient id="tU" x1="0" x2="0" y1="0" y2="1"><stop offset="0" stop-color="#a2a2a2"/><stop offset=".12" stop-color="#8e8e8e"/><stop offset=".68" stop-color="#747474"/><stop offset="1" stop-color="#505050"/></linearGradient>
<linearGradient id="tS" x1="0" x2="0" y1="0" y2="1"><stop offset="0" stop-color="#181818"/><stop offset=".6" stop-color="#242424"/><stop offset="1" stop-color="#383838"/></linearGradient>
<linearGradient id="bt" x1="0" x2="0" y1="0" y2="1"><stop offset="0" stop-color="#989898"/><stop offset="1" stop-color="#5e5e5e"/></linearGradient>
<linearGradient id="bt2" x1="0" x2="0" y1="0" y2="1"><stop offset="0" stop-color="#6c6c6c"/><stop offset="1" stop-color="#4e4e4e"/></linearGradient>
<linearGradient id="bn" x1="0" x2="0" y1="0" y2="1"><stop offset="0" stop-color="#a4a4a4"/><stop offset=".15" stop-color="#929292"/><stop offset="1" stop-color="#626262"/></linearGradient>
<linearGradient id="ic" x1="0" x2="0" y1="0" y2="1"><stop offset="0" stop-color="#727272"/><stop offset="1" stop-color="#a6a6a6"/></linearGradient>
<linearGradient id="sq" x1="0" x2="0" y1="0" y2="1"><stop offset="0" stop-color="#b4b4b4"/><stop offset=".5" stop-color="#a0a0a0"/><stop offset=".52" stop-color="#8a8a8a"/><stop offset="1" stop-color="#8e8e8e"/></linearGradient>
<path d="M1.6 760V698a4 4 0 0 1 4-4h147.6a4 4 0 0 1 4 4V760z" fill="url(#tS)"/>
<rect x="6.4" y="698.8" width="145.6" height="37.4" rx="3.5" fill="#c0c0c0" stroke="#e4e4e4" stroke-width="1"/>
<text x="79.2" y="751.6" font-size="10.4" font-weight="bold" fill="#fff" text-anchor="middle">White</text>
<path d="M159.27 760V698a4 4 0 0 1 4-4h147.6a4 4 0 0 1 4 4V760z" fill="url(#tU)"/>
<rect x="164.07" y="698.8" width="145.6" height="37.4" rx="3.5" fill="#c00000" stroke="#00000030" stroke-width="0.8"/>
<text x="236.87" y="751.6" font-size="10.4" font-weight="bold" fill="#2a2a2a" text-anchor="middle">Red</text>
<path d="M316.94 760V698a4 4 0 0 1 4-4h147.6a4 4 0 0 1 4 4V760z" fill="url(#tU)"/>
<rect x="321.74" y="698.8" width="145.6" height="37.4" rx="3.5" fill="#00c000" stroke="#00000030" stroke-width="0.8"/>
<text x="394.54" y="751.6" font-size="10.4" font-weight="bold" fill="#2a2a2a" text-anchor="middle">Green</text>
<path d="M474.61 760V698a4 4 0 0 1 4-4h147.6a4 4 0 0 1 4 4V760z" fill="url(#tU)"/>
<rect x="479.41" y="698.8" width="145.6" height="37.4" rx="3.5" fill="#0000c0" stroke="#00000030" stroke-width="0.8"/>
<text x="552.21" y="751.6" font-size="10.4" font-weight="bold" fill="#2a2a2a" text-anchor="middle">Blue</text>
<path d="M632.28 760V698a4 4 0 0 1 4-4h147.6a4 4 0 0 1 4 4V760z" fill="url(#tU)"/>
<rect x="637.08" y="698.8" width="145.6" height="37.4" rx="3.5" fill="#00c0c0" stroke="#00000030" stroke-width="0.8"/>
<text x="709.88" y="751.6" font-size="10.4" font-weight="bold" fill="#2a2a2a" text-anchor="middle">Cyan</text>
<path d="M789.95 760V698a4 4 0 0 1 4-4h147.6a4 4 0 0 1 4 4V760z" fill="url(#tU)"/>
<rect x="794.75" y="698.8" width="145.6" height="37.4" rx="3.5" fill="#c000c0" stroke="#00000030" stroke-width="0.8"/>
<text x="867.55" y="751.6" font-size="10.4" font-weight="bold" fill="#2a2a2a" text-anchor="middle">Magenta</text>
<path d="M947.62 760V698a4 4 0 0 1 4-4h147.6a4 4 0 0 1 4 4V760z" fill="url(#tU)"/>
<rect x="952.42" y="698.8" width="145.6" height="37.4" rx="3.5" fill="#c0c000" stroke="#00000030" stroke-width="0.8"/>
<text x="1025.22" y="751.6" font-size="10.4" font-weight="bold" fill="#2a2a2a" text-anchor="middle">Yellow</text>
<path d="M1105.29 760V698a4 4 0 0 1 4-4h147.6a4 4 0 0 1 4 4V760z" fill="url(#tU)"/>
<rect x="1110.09" y="698.8" width="145.6" height="37.4" rx="3.5" fill="#ffffff" stroke="#00000030" stroke-width="0.8"/>
<text x="1182.89" y="751.6" font-size="10.4" font-weight="bold" fill="#2a2a2a" text-anchor="middle">100W</text>
<path d="M1264 712.2V697.8a4 4 0 0 1 4-4h41a4 4 0 0 1 4 4v14.4z" fill="url(#bt)"/>
<ellipse cx="1288.5" cy="703.5" rx="7.5" ry="7" fill="#868686"/><path d="M1283.4 705.4l5.1-4.6 5.1 4.6z" fill="#262626"/>
<rect x="1264" y="713.6" width="49" height="46" fill="url(#bt2)"/>
<rect x="1273.4" y="720.2" width="29.6" height="29.2" rx="4" fill="url(#sq)" stroke="#0c0c0c" stroke-width="2"/>
<rect x="1282" y="728" width="14" height="13.8" fill="#0a0a0a"/>
<rect x="1315" y="693.8" width="45.8" height="30" fill="url(#bt)"/>
<circle cx="1338.5" cy="709" r="9.6" fill="url(#ic)"/>
<rect x="1362" y="693.8" width="45.8" height="30" fill="url(#bt)"/>
<circle cx="1385.5" cy="709" r="9.6" fill="url(#ic)"/>
<rect x="1409" y="693.8" width="45.8" height="30" fill="url(#bt)"/>
<circle cx="1432.5" cy="709" r="9.6" fill="url(#ic)"/>
<rect x="1456" y="693.8" width="45.8" height="30" fill="url(#bt)"/>
<circle cx="1479.5" cy="709" r="9.6" fill="url(#ic)"/>
<rect x="1503" y="693.8" width="45.8" height="30" fill="url(#bt)"/>
<circle cx="1526.5" cy="709" r="9.6" fill="url(#ic)"/>
<rect x="1335" y="705.4" width="7.4" height="7.4" fill="#2e2e2e"/>
<path d="M1382.6 703.6l8.4 5.4-8.4 5.4z" fill="#2a2a2a"/>
<path d="M1430.4 703.4h-2.6v11.2h2.6M1434.6 703.4h2.6v11.2h-2.6" fill="none" stroke="#2e2e2e" stroke-width="1.5"/><path d="M1430.2 709h4.6" stroke="#2e2e2e" stroke-width="1.4"/>
<path d="M1479.5 708c-1.2-2-2.4-2.8-3.8-2.8a2.8 2.8 0 0 0 0 5.600c1.400 0 2.600-.8 3.800-2.800c1.200-2 2.400-2.800 3.800-2.800a2.800 2.800 0 0 1 0 5.600c-1.400 0-2.600-.8-3.800-2.800z" fill="none" stroke="#333" stroke-width="1.5"/>
<path d="M1521.4 707.600a5.200 5.200 0 0 1 9.400-1.600M1531.600 710.400a5.200 5.200 0 0 1-9.400 1.600" fill="none" stroke="#2e2e2e" stroke-width="2"/><path d="M1532.600 703.400v4h-4zM1520.400 714.600v-4h4z" fill="#2e2e2e"/>
<rect x="1315.200" y="726" width="140.600" height="34" rx="3" fill="url(#bn)"/>
<rect x="1457.200" y="726" width="141.600" height="34" rx="3" fill="url(#bn)"/>
<circle cx="1346.700" cy="741" r="9.600" fill="url(#ic)"/><circle cx="1568.500" cy="741" r="9.600" fill="url(#ic)"/>
<path d="M1346 736.600l-3.600 4.400 3.600 4.400M1350.400 736.600l-3.600 4.400 3.600 4.400" fill="none" stroke="#333" stroke-width="1.400"/>
<path d="M1565 736.600l3.600 4.400-3.600 4.400M1569.400 736.600l3.600 4.400-3.600 4.400" fill="none" stroke="#333" stroke-width="1.400"/>
<text x="1374.900" y="749.200" font-size="21" fill="#2a2a2a" textLength="51" lengthAdjust="spacingAndGlyphs" stroke="#2a2a2a" stroke-width=".4">Back</text>
<text x="1486.400" y="749.200" font-size="21" fill="#2a2a2a" textLength="52.800" lengthAdjust="spacingAndGlyphs" stroke="#2a2a2a" stroke-width=".4">Next</text>
<text x="1572.900" y="737.600" font-size="57" font-weight="bold" font-family="'DejaVu Serif',serif" fill="#ee0b0b" stroke="#ee0b0b" stroke-width="1" text-anchor="middle" style="filter:drop-shadow(1px 1.500px 1px #0009)">*</text>
</svg>
</body></html>
